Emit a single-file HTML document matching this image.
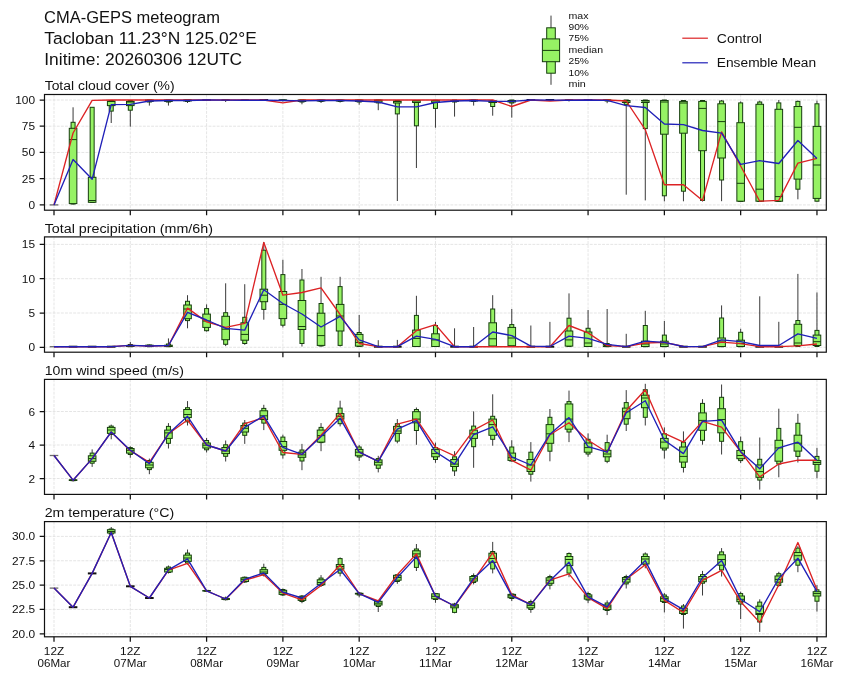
<!DOCTYPE html>
<html><head><meta charset="utf-8"><style>
html,body{margin:0;padding:0;background:#fff;}
body{width:845px;height:680px;overflow:hidden;}
svg{display:block;will-change:transform;}
text{font-family:"Liberation Sans", sans-serif;}
</style></head><body>
<svg width="845" height="680" viewBox="0 0 845 680">
<rect x="0" y="0" width="845" height="680" fill="#fff"/>
<text x="44.00" y="23.00" font-size="16.32" text-anchor="start" textLength="175.93" lengthAdjust="spacingAndGlyphs" fill="#111">CMA-GEPS meteogram</text>
<text x="44.30" y="43.80" font-size="16.32" text-anchor="start" textLength="212.45" lengthAdjust="spacingAndGlyphs" fill="#111">Tacloban 11.23°N 125.02°E</text>
<text x="44.30" y="65.40" font-size="16.32" text-anchor="start" textLength="197.86" lengthAdjust="spacingAndGlyphs" fill="#111">Initime: 20260306 12UTC</text>
<line x1="551.0" y1="15.6" x2="551.0" y2="84.8" stroke="#3a3a3a" stroke-width="1"/>
<rect x="546.7" y="27.8" width="8.6" height="45.4" fill="#96f264" stroke="#163d0e" stroke-width="1"/>
<rect x="542.4" y="38.9" width="17.2" height="22.8" fill="#96f264" stroke="#163d0e" stroke-width="1"/>
<line x1="542.4" y1="50.4" x2="559.6" y2="50.4" stroke="#163d0e" stroke-width="1"/>
<text x="568.50" y="18.60" font-size="9.75" text-anchor="start" textLength="20.04" lengthAdjust="spacingAndGlyphs" fill="#111">max</text>
<text x="568.50" y="30.00" font-size="9.75" text-anchor="start" textLength="20.45" lengthAdjust="spacingAndGlyphs" fill="#111">90%</text>
<text x="568.50" y="41.40" font-size="9.75" text-anchor="start" textLength="20.45" lengthAdjust="spacingAndGlyphs" fill="#111">75%</text>
<text x="568.50" y="52.80" font-size="9.75" text-anchor="start" textLength="34.49" lengthAdjust="spacingAndGlyphs" fill="#111">median</text>
<text x="568.50" y="64.20" font-size="9.75" text-anchor="start" textLength="20.45" lengthAdjust="spacingAndGlyphs" fill="#111">25%</text>
<text x="568.50" y="75.60" font-size="9.75" text-anchor="start" textLength="20.45" lengthAdjust="spacingAndGlyphs" fill="#111">10%</text>
<text x="568.50" y="87.00" font-size="9.75" text-anchor="start" textLength="17.35" lengthAdjust="spacingAndGlyphs" fill="#111">min</text>
<line x1="682.3" y1="38.2" x2="707.9" y2="38.2" stroke="#dc2224" stroke-width="1.2"/>
<line x1="682.3" y1="62.8" x2="707.9" y2="62.8" stroke="#2020b8" stroke-width="1.2"/>
<text x="716.80" y="42.70" font-size="13.25" text-anchor="start" textLength="45.18" lengthAdjust="spacingAndGlyphs" fill="#111">Control</text>
<text x="716.80" y="67.00" font-size="13.25" text-anchor="start" textLength="99.33" lengthAdjust="spacingAndGlyphs" fill="#111">Ensemble Mean</text>
<path d="M54.00 94.50V210.20 M130.30 94.50V210.20 M206.59 94.50V210.20 M282.89 94.50V210.20 M359.18 94.50V210.20 M435.48 94.50V210.20 M511.78 94.50V210.20 M588.07 94.50V210.20 M664.37 94.50V210.20 M740.66 94.50V210.20 M816.96 94.50V210.20 M44.50 204.90H826.30 M44.50 178.68H826.30 M44.50 152.45H826.30 M44.50 126.23H826.30 M44.50 100.00H826.30" stroke="#dedede" stroke-width="0.8" stroke-dasharray="2.9 1.2" fill="none"/>
<line x1="49.70" y1="204.90" x2="58.30" y2="204.90" stroke="#6a6a6a" stroke-width="1.3"/>
<line x1="73.07" y1="107.30" x2="73.07" y2="204.50" stroke="#3a3a3a" stroke-width="1"/>
<rect x="71.07" y="122.30" width="4.0" height="81.70" fill="#96f264" stroke="#163d0e" stroke-width="1"/>
<rect x="69.27" y="128.30" width="7.6" height="75.30" fill="#96f264" stroke="#163d0e" stroke-width="1"/>
<line x1="69.27" y1="139.60" x2="76.87" y2="139.60" stroke="#163d0e" stroke-width="1"/>
<line x1="92.15" y1="107.00" x2="92.15" y2="203.00" stroke="#3a3a3a" stroke-width="1"/>
<rect x="90.15" y="107.30" width="4.0" height="95.20" fill="#96f264" stroke="#163d0e" stroke-width="1"/>
<rect x="88.35" y="177.30" width="7.6" height="25.00" fill="#96f264" stroke="#163d0e" stroke-width="1"/>
<line x1="88.35" y1="200.50" x2="95.95" y2="200.50" stroke="#163d0e" stroke-width="1"/>
<line x1="111.22" y1="100.00" x2="111.22" y2="123.00" stroke="#3a3a3a" stroke-width="1"/>
<rect x="109.22" y="100.50" width="4.0" height="10.60" fill="#96f264" stroke="#163d0e" stroke-width="1"/>
<rect x="107.42" y="101.00" width="7.6" height="4.60" fill="#96f264" stroke="#163d0e" stroke-width="1"/>
<line x1="107.42" y1="101.50" x2="115.02" y2="101.50" stroke="#163d0e" stroke-width="1"/>
<line x1="130.30" y1="100.00" x2="130.30" y2="126.70" stroke="#3a3a3a" stroke-width="1"/>
<rect x="128.30" y="100.50" width="4.0" height="9.70" fill="#96f264" stroke="#163d0e" stroke-width="1"/>
<rect x="126.50" y="101.40" width="7.6" height="4.20" fill="#96f264" stroke="#163d0e" stroke-width="1"/>
<line x1="126.50" y1="102.00" x2="134.10" y2="102.00" stroke="#163d0e" stroke-width="1"/>
<line x1="149.37" y1="100.00" x2="149.37" y2="105.60" stroke="#3a3a3a" stroke-width="1"/>
<rect x="147.37" y="100.00" width="4.0" height="2.00" fill="#96f264" stroke="#163d0e" stroke-width="1"/>
<rect x="145.57" y="100.00" width="7.6" height="1.50" fill="#96f264" stroke="#163d0e" stroke-width="1"/>
<line x1="145.57" y1="100.50" x2="153.17" y2="100.50" stroke="#163d0e" stroke-width="1"/>
<line x1="168.44" y1="100.00" x2="168.44" y2="105.60" stroke="#3a3a3a" stroke-width="1"/>
<rect x="166.44" y="100.00" width="4.0" height="2.00" fill="#96f264" stroke="#163d0e" stroke-width="1"/>
<rect x="164.64" y="100.00" width="7.6" height="1.50" fill="#96f264" stroke="#163d0e" stroke-width="1"/>
<line x1="164.64" y1="100.50" x2="172.24" y2="100.50" stroke="#163d0e" stroke-width="1"/>
<line x1="187.52" y1="100.00" x2="187.52" y2="103.00" stroke="#3a3a3a" stroke-width="1"/>
<rect x="185.52" y="100.00" width="4.0" height="1.50" fill="#96f264" stroke="#163d0e" stroke-width="1"/>
<rect x="183.72" y="100.00" width="7.6" height="1.00" fill="#96f264" stroke="#163d0e" stroke-width="1"/>
<line x1="183.72" y1="100.00" x2="191.32" y2="100.00" stroke="#163d0e" stroke-width="1"/>
<line x1="206.59" y1="100.00" x2="206.59" y2="100.50" stroke="#3a3a3a" stroke-width="1"/>
<line x1="202.29" y1="100.00" x2="210.89" y2="100.00" stroke="#111" stroke-width="2"/>
<line x1="225.67" y1="100.00" x2="225.67" y2="102.00" stroke="#3a3a3a" stroke-width="1"/>
<rect x="223.67" y="100.00" width="4.0" height="0.50" fill="#96f264" stroke="#163d0e" stroke-width="1"/>
<rect x="221.87" y="100.00" width="7.6" height="0.50" fill="#96f264" stroke="#163d0e" stroke-width="1"/>
<line x1="221.87" y1="100.00" x2="229.47" y2="100.00" stroke="#163d0e" stroke-width="1"/>
<line x1="244.74" y1="100.00" x2="244.74" y2="101.00" stroke="#3a3a3a" stroke-width="1"/>
<rect x="242.74" y="100.00" width="4.0" height="0.50" fill="#96f264" stroke="#163d0e" stroke-width="1"/>
<rect x="240.94" y="100.00" width="7.6" height="0.01" fill="#96f264" stroke="#163d0e" stroke-width="1"/>
<line x1="240.94" y1="100.00" x2="248.54" y2="100.00" stroke="#163d0e" stroke-width="1"/>
<line x1="263.81" y1="100.00" x2="263.81" y2="100.50" stroke="#3a3a3a" stroke-width="1"/>
<line x1="259.51" y1="100.00" x2="268.11" y2="100.00" stroke="#111" stroke-width="2"/>
<line x1="282.89" y1="100.00" x2="282.89" y2="101.50" stroke="#3a3a3a" stroke-width="1"/>
<rect x="280.89" y="100.00" width="4.0" height="0.50" fill="#96f264" stroke="#163d0e" stroke-width="1"/>
<rect x="279.09" y="100.00" width="7.6" height="0.50" fill="#96f264" stroke="#163d0e" stroke-width="1"/>
<line x1="279.09" y1="100.00" x2="286.69" y2="100.00" stroke="#163d0e" stroke-width="1"/>
<line x1="301.96" y1="100.00" x2="301.96" y2="104.30" stroke="#3a3a3a" stroke-width="1"/>
<rect x="299.96" y="100.00" width="4.0" height="2.00" fill="#96f264" stroke="#163d0e" stroke-width="1"/>
<rect x="298.16" y="100.00" width="7.6" height="1.50" fill="#96f264" stroke="#163d0e" stroke-width="1"/>
<line x1="298.16" y1="100.50" x2="305.76" y2="100.50" stroke="#163d0e" stroke-width="1"/>
<line x1="321.04" y1="100.00" x2="321.04" y2="103.00" stroke="#3a3a3a" stroke-width="1"/>
<rect x="319.04" y="100.00" width="4.0" height="1.50" fill="#96f264" stroke="#163d0e" stroke-width="1"/>
<rect x="317.24" y="100.00" width="7.6" height="1.00" fill="#96f264" stroke="#163d0e" stroke-width="1"/>
<line x1="317.24" y1="100.50" x2="324.84" y2="100.50" stroke="#163d0e" stroke-width="1"/>
<line x1="340.11" y1="100.00" x2="340.11" y2="102.50" stroke="#3a3a3a" stroke-width="1"/>
<rect x="338.11" y="100.00" width="4.0" height="1.50" fill="#96f264" stroke="#163d0e" stroke-width="1"/>
<rect x="336.31" y="100.00" width="7.6" height="1.00" fill="#96f264" stroke="#163d0e" stroke-width="1"/>
<line x1="336.31" y1="100.50" x2="343.91" y2="100.50" stroke="#163d0e" stroke-width="1"/>
<line x1="359.18" y1="100.00" x2="359.18" y2="104.70" stroke="#3a3a3a" stroke-width="1"/>
<rect x="357.18" y="100.00" width="4.0" height="2.00" fill="#96f264" stroke="#163d0e" stroke-width="1"/>
<rect x="355.38" y="100.00" width="7.6" height="1.50" fill="#96f264" stroke="#163d0e" stroke-width="1"/>
<line x1="355.38" y1="100.50" x2="362.98" y2="100.50" stroke="#163d0e" stroke-width="1"/>
<line x1="378.26" y1="100.00" x2="378.26" y2="110.20" stroke="#3a3a3a" stroke-width="1"/>
<rect x="376.26" y="100.00" width="4.0" height="2.90" fill="#96f264" stroke="#163d0e" stroke-width="1"/>
<rect x="374.46" y="100.00" width="7.6" height="2.00" fill="#96f264" stroke="#163d0e" stroke-width="1"/>
<line x1="374.46" y1="100.50" x2="382.06" y2="100.50" stroke="#163d0e" stroke-width="1"/>
<line x1="397.33" y1="100.00" x2="397.33" y2="201.00" stroke="#3a3a3a" stroke-width="1"/>
<rect x="395.33" y="100.50" width="4.0" height="13.40" fill="#96f264" stroke="#163d0e" stroke-width="1"/>
<rect x="393.53" y="101.00" width="7.6" height="2.00" fill="#96f264" stroke="#163d0e" stroke-width="1"/>
<line x1="393.53" y1="101.50" x2="401.13" y2="101.50" stroke="#163d0e" stroke-width="1"/>
<line x1="416.41" y1="100.00" x2="416.41" y2="168.00" stroke="#3a3a3a" stroke-width="1"/>
<rect x="414.41" y="100.50" width="4.0" height="25.30" fill="#96f264" stroke="#163d0e" stroke-width="1"/>
<rect x="412.61" y="100.50" width="7.6" height="2.00" fill="#96f264" stroke="#163d0e" stroke-width="1"/>
<line x1="412.61" y1="101.00" x2="420.21" y2="101.00" stroke="#163d0e" stroke-width="1"/>
<line x1="435.48" y1="100.00" x2="435.48" y2="127.70" stroke="#3a3a3a" stroke-width="1"/>
<rect x="433.48" y="100.30" width="4.0" height="8.10" fill="#96f264" stroke="#163d0e" stroke-width="1"/>
<rect x="431.68" y="100.50" width="7.6" height="2.00" fill="#96f264" stroke="#163d0e" stroke-width="1"/>
<line x1="431.68" y1="101.00" x2="439.28" y2="101.00" stroke="#163d0e" stroke-width="1"/>
<line x1="454.55" y1="100.00" x2="454.55" y2="116.60" stroke="#3a3a3a" stroke-width="1"/>
<rect x="452.55" y="100.00" width="4.0" height="2.00" fill="#96f264" stroke="#163d0e" stroke-width="1"/>
<rect x="450.75" y="100.50" width="7.6" height="1.00" fill="#96f264" stroke="#163d0e" stroke-width="1"/>
<line x1="450.75" y1="101.00" x2="458.35" y2="101.00" stroke="#163d0e" stroke-width="1"/>
<line x1="473.63" y1="100.00" x2="473.63" y2="105.60" stroke="#3a3a3a" stroke-width="1"/>
<rect x="471.63" y="100.00" width="4.0" height="1.50" fill="#96f264" stroke="#163d0e" stroke-width="1"/>
<rect x="469.83" y="100.00" width="7.6" height="1.00" fill="#96f264" stroke="#163d0e" stroke-width="1"/>
<line x1="469.83" y1="100.50" x2="477.43" y2="100.50" stroke="#163d0e" stroke-width="1"/>
<line x1="492.70" y1="100.00" x2="492.70" y2="115.70" stroke="#3a3a3a" stroke-width="1"/>
<rect x="490.70" y="100.50" width="4.0" height="6.00" fill="#96f264" stroke="#163d0e" stroke-width="1"/>
<rect x="488.90" y="101.00" width="7.6" height="1.50" fill="#96f264" stroke="#163d0e" stroke-width="1"/>
<line x1="488.90" y1="101.50" x2="496.50" y2="101.50" stroke="#163d0e" stroke-width="1"/>
<line x1="511.78" y1="100.00" x2="511.78" y2="117.60" stroke="#3a3a3a" stroke-width="1"/>
<rect x="509.78" y="100.00" width="4.0" height="3.00" fill="#96f264" stroke="#163d0e" stroke-width="1"/>
<rect x="507.98" y="100.50" width="7.6" height="1.50" fill="#96f264" stroke="#163d0e" stroke-width="1"/>
<line x1="507.98" y1="101.00" x2="515.58" y2="101.00" stroke="#163d0e" stroke-width="1"/>
<line x1="530.85" y1="100.00" x2="530.85" y2="100.50" stroke="#3a3a3a" stroke-width="1"/>
<line x1="526.55" y1="100.00" x2="535.15" y2="100.00" stroke="#111" stroke-width="2"/>
<line x1="549.92" y1="100.00" x2="549.92" y2="101.00" stroke="#3a3a3a" stroke-width="1"/>
<line x1="545.62" y1="100.00" x2="554.22" y2="100.00" stroke="#111" stroke-width="2"/>
<line x1="569.00" y1="100.00" x2="569.00" y2="101.50" stroke="#3a3a3a" stroke-width="1"/>
<rect x="567.00" y="100.00" width="4.0" height="0.50" fill="#96f264" stroke="#163d0e" stroke-width="1"/>
<rect x="565.20" y="100.00" width="7.6" height="0.01" fill="#96f264" stroke="#163d0e" stroke-width="1"/>
<line x1="565.20" y1="100.00" x2="572.80" y2="100.00" stroke="#163d0e" stroke-width="1"/>
<line x1="588.07" y1="100.00" x2="588.07" y2="100.00" stroke="#3a3a3a" stroke-width="1"/>
<line x1="583.77" y1="100.00" x2="592.37" y2="100.00" stroke="#111" stroke-width="2"/>
<line x1="607.15" y1="100.00" x2="607.15" y2="103.20" stroke="#3a3a3a" stroke-width="1"/>
<rect x="605.15" y="100.00" width="4.0" height="1.00" fill="#96f264" stroke="#163d0e" stroke-width="1"/>
<rect x="603.35" y="100.00" width="7.6" height="0.50" fill="#96f264" stroke="#163d0e" stroke-width="1"/>
<line x1="603.35" y1="100.00" x2="610.95" y2="100.00" stroke="#163d0e" stroke-width="1"/>
<line x1="626.22" y1="100.00" x2="626.22" y2="194.70" stroke="#3a3a3a" stroke-width="1"/>
<rect x="624.22" y="100.00" width="4.0" height="4.70" fill="#96f264" stroke="#163d0e" stroke-width="1"/>
<rect x="622.42" y="100.50" width="7.6" height="2.00" fill="#96f264" stroke="#163d0e" stroke-width="1"/>
<line x1="622.42" y1="101.00" x2="630.02" y2="101.00" stroke="#163d0e" stroke-width="1"/>
<line x1="645.29" y1="100.00" x2="645.29" y2="200.40" stroke="#3a3a3a" stroke-width="1"/>
<rect x="643.29" y="100.00" width="4.0" height="28.60" fill="#96f264" stroke="#163d0e" stroke-width="1"/>
<rect x="641.49" y="100.50" width="7.6" height="2.00" fill="#96f264" stroke="#163d0e" stroke-width="1"/>
<line x1="641.49" y1="101.00" x2="649.09" y2="101.00" stroke="#163d0e" stroke-width="1"/>
<line x1="664.37" y1="100.00" x2="664.37" y2="201.30" stroke="#3a3a3a" stroke-width="1"/>
<rect x="662.37" y="100.00" width="4.0" height="95.80" fill="#96f264" stroke="#163d0e" stroke-width="1"/>
<rect x="660.57" y="100.50" width="7.6" height="33.70" fill="#96f264" stroke="#163d0e" stroke-width="1"/>
<line x1="660.57" y1="102.00" x2="668.17" y2="102.00" stroke="#163d0e" stroke-width="1"/>
<line x1="683.44" y1="100.00" x2="683.44" y2="201.30" stroke="#3a3a3a" stroke-width="1"/>
<rect x="681.44" y="100.50" width="4.0" height="90.70" fill="#96f264" stroke="#163d0e" stroke-width="1"/>
<rect x="679.64" y="101.40" width="7.6" height="31.80" fill="#96f264" stroke="#163d0e" stroke-width="1"/>
<line x1="679.64" y1="103.00" x2="687.24" y2="103.00" stroke="#163d0e" stroke-width="1"/>
<line x1="702.52" y1="100.00" x2="702.52" y2="201.50" stroke="#3a3a3a" stroke-width="1"/>
<rect x="700.52" y="100.50" width="4.0" height="99.90" fill="#96f264" stroke="#163d0e" stroke-width="1"/>
<rect x="698.72" y="101.40" width="7.6" height="49.30" fill="#96f264" stroke="#163d0e" stroke-width="1"/>
<line x1="698.72" y1="108.40" x2="706.32" y2="108.40" stroke="#163d0e" stroke-width="1"/>
<line x1="721.59" y1="100.00" x2="721.59" y2="201.20" stroke="#3a3a3a" stroke-width="1"/>
<rect x="719.59" y="101.00" width="4.0" height="79.00" fill="#96f264" stroke="#163d0e" stroke-width="1"/>
<rect x="717.79" y="103.80" width="7.6" height="54.20" fill="#96f264" stroke="#163d0e" stroke-width="1"/>
<line x1="717.79" y1="121.60" x2="725.39" y2="121.60" stroke="#163d0e" stroke-width="1"/>
<line x1="740.66" y1="101.40" x2="740.66" y2="201.80" stroke="#3a3a3a" stroke-width="1"/>
<rect x="738.66" y="102.90" width="4.0" height="98.60" fill="#96f264" stroke="#163d0e" stroke-width="1"/>
<rect x="736.86" y="122.70" width="7.6" height="78.50" fill="#96f264" stroke="#163d0e" stroke-width="1"/>
<line x1="736.86" y1="183.30" x2="744.46" y2="183.30" stroke="#163d0e" stroke-width="1"/>
<line x1="759.74" y1="100.70" x2="759.74" y2="201.80" stroke="#3a3a3a" stroke-width="1"/>
<rect x="757.74" y="102.00" width="4.0" height="99.50" fill="#96f264" stroke="#163d0e" stroke-width="1"/>
<rect x="755.94" y="104.30" width="7.6" height="96.90" fill="#96f264" stroke="#163d0e" stroke-width="1"/>
<line x1="755.94" y1="189.20" x2="763.54" y2="189.20" stroke="#163d0e" stroke-width="1"/>
<line x1="778.81" y1="100.00" x2="778.81" y2="201.80" stroke="#3a3a3a" stroke-width="1"/>
<rect x="776.81" y="102.90" width="4.0" height="98.60" fill="#96f264" stroke="#163d0e" stroke-width="1"/>
<rect x="775.01" y="109.30" width="7.6" height="91.90" fill="#96f264" stroke="#163d0e" stroke-width="1"/>
<line x1="775.01" y1="196.60" x2="782.61" y2="196.60" stroke="#163d0e" stroke-width="1"/>
<line x1="797.89" y1="100.50" x2="797.89" y2="199.30" stroke="#3a3a3a" stroke-width="1"/>
<rect x="795.89" y="101.40" width="4.0" height="87.80" fill="#96f264" stroke="#163d0e" stroke-width="1"/>
<rect x="794.09" y="106.50" width="7.6" height="72.60" fill="#96f264" stroke="#163d0e" stroke-width="1"/>
<line x1="794.09" y1="127.30" x2="801.69" y2="127.30" stroke="#163d0e" stroke-width="1"/>
<line x1="816.96" y1="100.70" x2="816.96" y2="201.50" stroke="#3a3a3a" stroke-width="1"/>
<rect x="814.96" y="103.80" width="4.0" height="97.40" fill="#96f264" stroke="#163d0e" stroke-width="1"/>
<rect x="813.16" y="126.40" width="7.6" height="72.00" fill="#96f264" stroke="#163d0e" stroke-width="1"/>
<line x1="813.16" y1="165.00" x2="820.76" y2="165.00" stroke="#163d0e" stroke-width="1"/>
<polyline points="54.00,204.90 73.07,133.00 92.15,100.30 111.22,100.00 130.30,100.00 149.37,100.00 168.44,100.00 187.52,100.00 206.59,100.00 225.67,100.00 244.74,100.00 263.81,100.00 282.89,102.90 301.96,100.00 321.04,100.00 340.11,100.00 359.18,100.00 378.26,100.00 397.33,100.00 416.41,100.00 435.48,100.00 454.55,100.00 473.63,100.00 492.70,100.00 511.78,106.50 530.85,100.00 549.92,101.00 569.00,100.00 588.07,100.00 607.15,100.00 626.22,101.00 645.29,129.60 664.37,184.70 683.44,184.70 702.52,200.40 721.59,131.90 740.66,166.00 759.74,201.20 778.81,200.30 797.89,163.10 816.96,158.40" fill="none" stroke="#dc2224" stroke-width="1.35" stroke-linejoin="round"/>
<polyline points="54.00,204.90 73.07,159.50 92.15,179.30 111.22,104.70 130.30,104.30 149.37,101.00 168.44,100.50 187.52,100.50 206.59,100.00 225.67,100.20 244.74,100.20 263.81,100.20 282.89,100.50 301.96,100.80 321.04,100.50 340.11,100.50 359.18,101.00 378.26,102.00 397.33,106.90 416.41,106.90 435.48,102.50 454.55,101.00 473.63,100.50 492.70,101.40 511.78,101.40 530.85,100.00 549.92,100.20 569.00,100.20 588.07,100.00 607.15,100.30 626.22,105.60 645.29,107.50 664.37,124.00 683.44,124.60 702.52,130.50 721.59,133.20 740.66,164.40 759.74,160.70 778.81,163.50 797.89,140.50 816.96,158.40" fill="none" stroke="#2020b8" stroke-width="1.35" stroke-linejoin="round"/>
<rect x="44.50" y="94.50" width="781.80" height="115.70" fill="none" stroke="#111" stroke-width="1.2"/>
<path d="M39.70 204.90H44.50 M39.70 178.68H44.50 M39.70 152.45H44.50 M39.70 126.23H44.50 M39.70 100.00H44.50 M54.00 210.20V215.20 M130.30 210.20V215.20 M206.59 210.20V215.20 M282.89 210.20V215.20 M359.18 210.20V215.20 M435.48 210.20V215.20 M511.78 210.20V215.20 M588.07 210.20V215.20 M664.37 210.20V215.20 M740.66 210.20V215.20 M816.96 210.20V215.20" stroke="#111" stroke-width="1.25" fill="none"/>
<text x="35.10" y="208.90" font-size="11.02" text-anchor="end" textLength="6.62" lengthAdjust="spacingAndGlyphs" fill="#111">0</text>
<text x="35.10" y="182.68" font-size="11.02" text-anchor="end" textLength="13.23" lengthAdjust="spacingAndGlyphs" fill="#111">25</text>
<text x="35.10" y="156.45" font-size="11.02" text-anchor="end" textLength="13.23" lengthAdjust="spacingAndGlyphs" fill="#111">50</text>
<text x="35.10" y="130.23" font-size="11.02" text-anchor="end" textLength="13.23" lengthAdjust="spacingAndGlyphs" fill="#111">75</text>
<text x="35.10" y="104.00" font-size="11.02" text-anchor="end" textLength="19.85" lengthAdjust="spacingAndGlyphs" fill="#111">100</text>
<text x="44.70" y="90.20" font-size="13.25" text-anchor="start" textLength="129.84" lengthAdjust="spacingAndGlyphs" fill="#111">Total cloud cover (%)</text>
<path d="M54.00 236.90V352.20 M130.30 236.90V352.20 M206.59 236.90V352.20 M282.89 236.90V352.20 M359.18 236.90V352.20 M435.48 236.90V352.20 M511.78 236.90V352.20 M588.07 236.90V352.20 M664.37 236.90V352.20 M740.66 236.90V352.20 M816.96 236.90V352.20 M44.50 347.30H826.30 M44.50 313.00H826.30 M44.50 278.70H826.30 M44.50 244.40H826.30" stroke="#dedede" stroke-width="0.8" stroke-dasharray="2.9 1.2" fill="none"/>
<line x1="49.70" y1="346.70" x2="58.30" y2="346.70" stroke="#6a6a6a" stroke-width="1.3"/>
<line x1="73.07" y1="346.70" x2="73.07" y2="346.70" stroke="#3a3a3a" stroke-width="1"/>
<line x1="68.77" y1="346.70" x2="77.37" y2="346.70" stroke="#111" stroke-width="2"/>
<line x1="92.15" y1="346.70" x2="92.15" y2="346.70" stroke="#3a3a3a" stroke-width="1"/>
<line x1="87.85" y1="346.70" x2="96.45" y2="346.70" stroke="#111" stroke-width="2"/>
<line x1="111.22" y1="346.70" x2="111.22" y2="346.70" stroke="#3a3a3a" stroke-width="1"/>
<line x1="106.92" y1="346.70" x2="115.52" y2="346.70" stroke="#111" stroke-width="2"/>
<line x1="130.30" y1="342.00" x2="130.30" y2="346.70" stroke="#3a3a3a" stroke-width="1"/>
<rect x="128.30" y="344.50" width="4.0" height="2.20" fill="#96f264" stroke="#163d0e" stroke-width="1"/>
<rect x="126.50" y="345.40" width="7.6" height="1.10" fill="#96f264" stroke="#163d0e" stroke-width="1"/>
<line x1="126.50" y1="346.00" x2="134.10" y2="346.00" stroke="#163d0e" stroke-width="1"/>
<line x1="149.37" y1="344.50" x2="149.37" y2="346.70" stroke="#3a3a3a" stroke-width="1"/>
<rect x="147.37" y="345.00" width="4.0" height="1.70" fill="#96f264" stroke="#163d0e" stroke-width="1"/>
<rect x="145.57" y="345.20" width="7.6" height="1.30" fill="#96f264" stroke="#163d0e" stroke-width="1"/>
<line x1="145.57" y1="346.00" x2="153.17" y2="346.00" stroke="#163d0e" stroke-width="1"/>
<line x1="168.44" y1="338.40" x2="168.44" y2="346.70" stroke="#3a3a3a" stroke-width="1"/>
<rect x="166.44" y="344.00" width="4.0" height="2.70" fill="#96f264" stroke="#163d0e" stroke-width="1"/>
<rect x="164.64" y="345.20" width="7.6" height="1.30" fill="#96f264" stroke="#163d0e" stroke-width="1"/>
<line x1="164.64" y1="346.00" x2="172.24" y2="346.00" stroke="#163d0e" stroke-width="1"/>
<line x1="187.52" y1="295.20" x2="187.52" y2="328.30" stroke="#3a3a3a" stroke-width="1"/>
<rect x="185.52" y="301.30" width="4.0" height="19.30" fill="#96f264" stroke="#163d0e" stroke-width="1"/>
<rect x="183.72" y="305.00" width="7.6" height="13.70" fill="#96f264" stroke="#163d0e" stroke-width="1"/>
<line x1="183.72" y1="309.00" x2="191.32" y2="309.00" stroke="#163d0e" stroke-width="1"/>
<line x1="206.59" y1="304.40" x2="206.59" y2="331.60" stroke="#3a3a3a" stroke-width="1"/>
<rect x="204.59" y="308.60" width="4.0" height="22.10" fill="#96f264" stroke="#163d0e" stroke-width="1"/>
<rect x="202.79" y="314.10" width="7.6" height="13.30" fill="#96f264" stroke="#163d0e" stroke-width="1"/>
<line x1="202.79" y1="321.00" x2="210.39" y2="321.00" stroke="#163d0e" stroke-width="1"/>
<line x1="225.67" y1="283.30" x2="225.67" y2="346.10" stroke="#3a3a3a" stroke-width="1"/>
<rect x="223.67" y="312.70" width="4.0" height="31.60" fill="#96f264" stroke="#163d0e" stroke-width="1"/>
<rect x="221.87" y="316.30" width="7.6" height="23.40" fill="#96f264" stroke="#163d0e" stroke-width="1"/>
<line x1="221.87" y1="329.20" x2="229.47" y2="329.20" stroke="#163d0e" stroke-width="1"/>
<line x1="244.74" y1="284.20" x2="244.74" y2="344.80" stroke="#3a3a3a" stroke-width="1"/>
<rect x="242.74" y="317.30" width="4.0" height="26.20" fill="#96f264" stroke="#163d0e" stroke-width="1"/>
<rect x="240.94" y="322.80" width="7.6" height="17.40" fill="#96f264" stroke="#163d0e" stroke-width="1"/>
<line x1="240.94" y1="334.40" x2="248.54" y2="334.40" stroke="#163d0e" stroke-width="1"/>
<line x1="263.81" y1="242.00" x2="263.81" y2="319.70" stroke="#3a3a3a" stroke-width="1"/>
<rect x="261.81" y="250.20" width="4.0" height="59.20" fill="#96f264" stroke="#163d0e" stroke-width="1"/>
<rect x="260.01" y="289.20" width="7.6" height="12.50" fill="#96f264" stroke="#163d0e" stroke-width="1"/>
<line x1="260.01" y1="295.20" x2="267.61" y2="295.20" stroke="#163d0e" stroke-width="1"/>
<line x1="282.89" y1="259.80" x2="282.89" y2="327.40" stroke="#3a3a3a" stroke-width="1"/>
<rect x="280.89" y="274.60" width="4.0" height="50.60" fill="#96f264" stroke="#163d0e" stroke-width="1"/>
<rect x="279.09" y="291.50" width="7.6" height="27.10" fill="#96f264" stroke="#163d0e" stroke-width="1"/>
<line x1="279.09" y1="304.40" x2="286.69" y2="304.40" stroke="#163d0e" stroke-width="1"/>
<line x1="301.96" y1="269.00" x2="301.96" y2="346.50" stroke="#3a3a3a" stroke-width="1"/>
<rect x="299.96" y="280.00" width="4.0" height="63.50" fill="#96f264" stroke="#163d0e" stroke-width="1"/>
<rect x="298.16" y="300.50" width="7.6" height="29.00" fill="#96f264" stroke="#163d0e" stroke-width="1"/>
<line x1="298.16" y1="326.50" x2="305.76" y2="326.50" stroke="#163d0e" stroke-width="1"/>
<line x1="321.04" y1="276.80" x2="321.04" y2="346.50" stroke="#3a3a3a" stroke-width="1"/>
<rect x="319.04" y="303.50" width="4.0" height="42.50" fill="#96f264" stroke="#163d0e" stroke-width="1"/>
<rect x="317.24" y="313.20" width="7.6" height="32.20" fill="#96f264" stroke="#163d0e" stroke-width="1"/>
<line x1="317.24" y1="335.60" x2="324.84" y2="335.60" stroke="#163d0e" stroke-width="1"/>
<line x1="340.11" y1="276.80" x2="340.11" y2="346.50" stroke="#3a3a3a" stroke-width="1"/>
<rect x="338.11" y="286.60" width="4.0" height="58.80" fill="#96f264" stroke="#163d0e" stroke-width="1"/>
<rect x="336.31" y="304.40" width="7.6" height="26.60" fill="#96f264" stroke="#163d0e" stroke-width="1"/>
<line x1="336.31" y1="316.00" x2="343.91" y2="316.00" stroke="#163d0e" stroke-width="1"/>
<line x1="359.18" y1="314.90" x2="359.18" y2="346.70" stroke="#3a3a3a" stroke-width="1"/>
<rect x="357.18" y="332.50" width="4.0" height="14.00" fill="#96f264" stroke="#163d0e" stroke-width="1"/>
<rect x="355.38" y="334.40" width="7.6" height="11.70" fill="#96f264" stroke="#163d0e" stroke-width="1"/>
<line x1="355.38" y1="342.40" x2="362.98" y2="342.40" stroke="#163d0e" stroke-width="1"/>
<line x1="378.26" y1="340.20" x2="378.26" y2="346.70" stroke="#3a3a3a" stroke-width="1"/>
<line x1="373.96" y1="346.70" x2="382.56" y2="346.70" stroke="#111" stroke-width="2"/>
<line x1="397.33" y1="339.90" x2="397.33" y2="346.70" stroke="#3a3a3a" stroke-width="1"/>
<line x1="393.03" y1="346.70" x2="401.63" y2="346.70" stroke="#111" stroke-width="2"/>
<line x1="416.41" y1="295.80" x2="416.41" y2="346.70" stroke="#3a3a3a" stroke-width="1"/>
<rect x="414.41" y="315.40" width="4.0" height="31.10" fill="#96f264" stroke="#163d0e" stroke-width="1"/>
<rect x="412.61" y="330.10" width="7.6" height="16.40" fill="#96f264" stroke="#163d0e" stroke-width="1"/>
<line x1="412.61" y1="338.40" x2="420.21" y2="338.40" stroke="#163d0e" stroke-width="1"/>
<line x1="435.48" y1="321.90" x2="435.48" y2="346.70" stroke="#3a3a3a" stroke-width="1"/>
<rect x="433.48" y="325.50" width="4.0" height="21.00" fill="#96f264" stroke="#163d0e" stroke-width="1"/>
<rect x="431.68" y="333.80" width="7.6" height="12.70" fill="#96f264" stroke="#163d0e" stroke-width="1"/>
<line x1="431.68" y1="339.90" x2="439.28" y2="339.90" stroke="#163d0e" stroke-width="1"/>
<line x1="454.55" y1="328.30" x2="454.55" y2="346.70" stroke="#3a3a3a" stroke-width="1"/>
<line x1="450.25" y1="346.70" x2="458.85" y2="346.70" stroke="#111" stroke-width="2"/>
<line x1="473.63" y1="327.00" x2="473.63" y2="346.70" stroke="#3a3a3a" stroke-width="1"/>
<line x1="469.33" y1="346.70" x2="477.93" y2="346.70" stroke="#111" stroke-width="2"/>
<line x1="492.70" y1="295.20" x2="492.70" y2="346.70" stroke="#3a3a3a" stroke-width="1"/>
<rect x="490.70" y="309.00" width="4.0" height="37.50" fill="#96f264" stroke="#163d0e" stroke-width="1"/>
<rect x="488.90" y="322.80" width="7.6" height="23.20" fill="#96f264" stroke="#163d0e" stroke-width="1"/>
<line x1="488.90" y1="338.80" x2="496.50" y2="338.80" stroke="#163d0e" stroke-width="1"/>
<line x1="511.78" y1="309.00" x2="511.78" y2="346.70" stroke="#3a3a3a" stroke-width="1"/>
<rect x="509.78" y="324.60" width="4.0" height="21.90" fill="#96f264" stroke="#163d0e" stroke-width="1"/>
<rect x="507.98" y="327.40" width="7.6" height="18.30" fill="#96f264" stroke="#163d0e" stroke-width="1"/>
<line x1="507.98" y1="338.00" x2="515.58" y2="338.00" stroke="#163d0e" stroke-width="1"/>
<line x1="530.85" y1="325.50" x2="530.85" y2="346.70" stroke="#3a3a3a" stroke-width="1"/>
<line x1="526.55" y1="346.70" x2="535.15" y2="346.70" stroke="#111" stroke-width="2"/>
<line x1="549.92" y1="321.90" x2="549.92" y2="346.70" stroke="#3a3a3a" stroke-width="1"/>
<line x1="545.62" y1="346.70" x2="554.22" y2="346.70" stroke="#111" stroke-width="2"/>
<line x1="569.00" y1="293.40" x2="569.00" y2="346.70" stroke="#3a3a3a" stroke-width="1"/>
<rect x="567.00" y="318.20" width="4.0" height="28.30" fill="#96f264" stroke="#163d0e" stroke-width="1"/>
<rect x="565.20" y="331.00" width="7.6" height="15.10" fill="#96f264" stroke="#163d0e" stroke-width="1"/>
<line x1="565.20" y1="339.90" x2="572.80" y2="339.90" stroke="#163d0e" stroke-width="1"/>
<line x1="588.07" y1="310.00" x2="588.07" y2="346.70" stroke="#3a3a3a" stroke-width="1"/>
<rect x="586.07" y="328.30" width="4.0" height="18.20" fill="#96f264" stroke="#163d0e" stroke-width="1"/>
<rect x="584.27" y="332.00" width="7.6" height="14.50" fill="#96f264" stroke="#163d0e" stroke-width="1"/>
<line x1="584.27" y1="343.00" x2="591.87" y2="343.00" stroke="#163d0e" stroke-width="1"/>
<line x1="607.15" y1="309.00" x2="607.15" y2="346.70" stroke="#3a3a3a" stroke-width="1"/>
<rect x="605.15" y="343.50" width="4.0" height="3.20" fill="#96f264" stroke="#163d0e" stroke-width="1"/>
<rect x="603.35" y="344.50" width="7.6" height="2.00" fill="#96f264" stroke="#163d0e" stroke-width="1"/>
<line x1="603.35" y1="345.50" x2="610.95" y2="345.50" stroke="#163d0e" stroke-width="1"/>
<line x1="626.22" y1="333.80" x2="626.22" y2="346.70" stroke="#3a3a3a" stroke-width="1"/>
<line x1="621.92" y1="346.70" x2="630.52" y2="346.70" stroke="#111" stroke-width="2"/>
<line x1="645.29" y1="310.80" x2="645.29" y2="346.70" stroke="#3a3a3a" stroke-width="1"/>
<rect x="643.29" y="325.50" width="4.0" height="21.20" fill="#96f264" stroke="#163d0e" stroke-width="1"/>
<rect x="641.49" y="341.20" width="7.6" height="5.30" fill="#96f264" stroke="#163d0e" stroke-width="1"/>
<line x1="641.49" y1="344.00" x2="649.09" y2="344.00" stroke="#163d0e" stroke-width="1"/>
<line x1="664.37" y1="321.00" x2="664.37" y2="346.70" stroke="#3a3a3a" stroke-width="1"/>
<rect x="662.37" y="335.10" width="4.0" height="11.60" fill="#96f264" stroke="#163d0e" stroke-width="1"/>
<rect x="660.57" y="341.20" width="7.6" height="5.30" fill="#96f264" stroke="#163d0e" stroke-width="1"/>
<line x1="660.57" y1="344.00" x2="668.17" y2="344.00" stroke="#163d0e" stroke-width="1"/>
<line x1="683.44" y1="346.70" x2="683.44" y2="346.70" stroke="#3a3a3a" stroke-width="1"/>
<line x1="679.14" y1="346.70" x2="687.74" y2="346.70" stroke="#111" stroke-width="2"/>
<line x1="702.52" y1="346.70" x2="702.52" y2="346.70" stroke="#3a3a3a" stroke-width="1"/>
<line x1="698.22" y1="346.70" x2="706.82" y2="346.70" stroke="#111" stroke-width="2"/>
<line x1="721.59" y1="305.40" x2="721.59" y2="346.70" stroke="#3a3a3a" stroke-width="1"/>
<rect x="719.59" y="318.00" width="4.0" height="28.70" fill="#96f264" stroke="#163d0e" stroke-width="1"/>
<rect x="717.79" y="338.00" width="7.6" height="8.50" fill="#96f264" stroke="#163d0e" stroke-width="1"/>
<line x1="717.79" y1="342.00" x2="725.39" y2="342.00" stroke="#163d0e" stroke-width="1"/>
<line x1="740.66" y1="328.80" x2="740.66" y2="346.70" stroke="#3a3a3a" stroke-width="1"/>
<rect x="738.66" y="332.30" width="4.0" height="14.40" fill="#96f264" stroke="#163d0e" stroke-width="1"/>
<rect x="736.86" y="340.20" width="7.6" height="6.30" fill="#96f264" stroke="#163d0e" stroke-width="1"/>
<line x1="736.86" y1="343.50" x2="744.46" y2="343.50" stroke="#163d0e" stroke-width="1"/>
<line x1="759.74" y1="296.30" x2="759.74" y2="346.70" stroke="#3a3a3a" stroke-width="1"/>
<line x1="755.44" y1="346.70" x2="764.04" y2="346.70" stroke="#111" stroke-width="2"/>
<line x1="778.81" y1="321.80" x2="778.81" y2="346.70" stroke="#3a3a3a" stroke-width="1"/>
<line x1="774.51" y1="346.70" x2="783.11" y2="346.70" stroke="#111" stroke-width="2"/>
<line x1="797.89" y1="273.90" x2="797.89" y2="346.70" stroke="#3a3a3a" stroke-width="1"/>
<rect x="795.89" y="320.50" width="4.0" height="26.00" fill="#96f264" stroke="#163d0e" stroke-width="1"/>
<rect x="794.09" y="324.30" width="7.6" height="21.20" fill="#96f264" stroke="#163d0e" stroke-width="1"/>
<line x1="794.09" y1="343.00" x2="801.69" y2="343.00" stroke="#163d0e" stroke-width="1"/>
<line x1="816.96" y1="292.50" x2="816.96" y2="346.70" stroke="#3a3a3a" stroke-width="1"/>
<rect x="814.96" y="330.40" width="4.0" height="16.10" fill="#96f264" stroke="#163d0e" stroke-width="1"/>
<rect x="813.16" y="335.10" width="7.6" height="10.40" fill="#96f264" stroke="#163d0e" stroke-width="1"/>
<line x1="813.16" y1="341.70" x2="820.76" y2="341.70" stroke="#163d0e" stroke-width="1"/>
<polyline points="54.00,346.70 73.07,346.70 92.15,346.70 111.22,346.70 130.30,345.40 149.37,346.20 168.44,345.70 187.52,308.10 206.59,321.90 225.67,327.40 244.74,323.30 263.81,242.50 282.89,295.20 301.96,292.50 321.04,287.90 340.11,314.50 359.18,343.50 378.26,346.70 397.33,346.70 416.41,330.70 435.48,324.60 454.55,346.70 473.63,346.70 492.70,346.70 511.78,346.70 530.85,346.70 549.92,346.70 569.00,325.50 588.07,332.90 607.15,345.70 626.22,346.70 645.29,343.00 664.37,342.40 683.44,346.50 702.52,346.70 721.59,342.10 740.66,343.60 759.74,346.70 778.81,346.70 797.89,345.90 816.96,344.00" fill="none" stroke="#dc2224" stroke-width="1.35" stroke-linejoin="round"/>
<polyline points="54.00,346.70 73.07,346.70 92.15,346.70 111.22,346.70 130.30,345.40 149.37,346.00 168.44,345.50 187.52,312.30 206.59,320.00 225.67,328.30 244.74,330.10 263.81,289.70 282.89,303.50 301.96,314.00 321.04,327.00 340.11,316.30 359.18,339.90 378.26,346.70 397.33,346.70 416.41,336.20 435.48,339.30 454.55,346.70 473.63,346.70 492.70,332.00 511.78,335.60 530.85,346.10 549.92,346.50 569.00,336.20 588.07,338.40 607.15,344.30 626.22,346.70 645.29,341.20 664.37,342.40 683.44,346.50 702.52,346.70 721.59,339.80 740.66,341.70 759.74,345.50 778.81,345.50 797.89,333.80 816.96,338.30" fill="none" stroke="#2020b8" stroke-width="1.35" stroke-linejoin="round"/>
<rect x="44.50" y="236.90" width="781.80" height="115.30" fill="none" stroke="#111" stroke-width="1.2"/>
<path d="M39.70 347.30H44.50 M39.70 313.00H44.50 M39.70 278.70H44.50 M39.70 244.40H44.50 M54.00 352.20V357.20 M130.30 352.20V357.20 M206.59 352.20V357.20 M282.89 352.20V357.20 M359.18 352.20V357.20 M435.48 352.20V357.20 M511.78 352.20V357.20 M588.07 352.20V357.20 M664.37 352.20V357.20 M740.66 352.20V357.20 M816.96 352.20V357.20" stroke="#111" stroke-width="1.25" fill="none"/>
<text x="35.10" y="351.30" font-size="11.02" text-anchor="end" textLength="6.62" lengthAdjust="spacingAndGlyphs" fill="#111">0</text>
<text x="35.10" y="317.00" font-size="11.02" text-anchor="end" textLength="6.62" lengthAdjust="spacingAndGlyphs" fill="#111">5</text>
<text x="35.10" y="282.70" font-size="11.02" text-anchor="end" textLength="13.23" lengthAdjust="spacingAndGlyphs" fill="#111">10</text>
<text x="35.10" y="248.40" font-size="11.02" text-anchor="end" textLength="13.23" lengthAdjust="spacingAndGlyphs" fill="#111">15</text>
<text x="44.70" y="232.60" font-size="13.25" text-anchor="start" textLength="168.28" lengthAdjust="spacingAndGlyphs" fill="#111">Total precipitation (mm/6h)</text>
<path d="M54.00 379.40V494.40 M130.30 379.40V494.40 M206.59 379.40V494.40 M282.89 379.40V494.40 M359.18 379.40V494.40 M435.48 379.40V494.40 M511.78 379.40V494.40 M588.07 379.40V494.40 M664.37 379.40V494.40 M740.66 379.40V494.40 M816.96 379.40V494.40 M44.50 478.50H826.30 M44.50 445.00H826.30 M44.50 411.50H826.30" stroke="#dedede" stroke-width="0.8" stroke-dasharray="2.9 1.2" fill="none"/>
<line x1="49.70" y1="455.50" x2="58.30" y2="455.50" stroke="#6a6a6a" stroke-width="1.3"/>
<line x1="73.07" y1="479.00" x2="73.07" y2="481.50" stroke="#3a3a3a" stroke-width="1"/>
<rect x="71.07" y="479.60" width="4.0" height="1.10" fill="#96f264" stroke="#163d0e" stroke-width="1"/>
<rect x="69.27" y="479.80" width="7.6" height="0.70" fill="#96f264" stroke="#163d0e" stroke-width="1"/>
<line x1="69.27" y1="480.20" x2="76.87" y2="480.20" stroke="#163d0e" stroke-width="1"/>
<line x1="92.15" y1="449.40" x2="92.15" y2="466.90" stroke="#3a3a3a" stroke-width="1"/>
<rect x="90.15" y="453.10" width="4.0" height="10.10" fill="#96f264" stroke="#163d0e" stroke-width="1"/>
<rect x="88.35" y="455.80" width="7.6" height="5.50" fill="#96f264" stroke="#163d0e" stroke-width="1"/>
<line x1="88.35" y1="458.60" x2="95.95" y2="458.60" stroke="#163d0e" stroke-width="1"/>
<line x1="111.22" y1="424.60" x2="111.22" y2="439.30" stroke="#3a3a3a" stroke-width="1"/>
<rect x="109.22" y="426.10" width="4.0" height="8.40" fill="#96f264" stroke="#163d0e" stroke-width="1"/>
<rect x="107.42" y="427.40" width="7.6" height="6.00" fill="#96f264" stroke="#163d0e" stroke-width="1"/>
<line x1="107.42" y1="430.00" x2="115.02" y2="430.00" stroke="#163d0e" stroke-width="1"/>
<line x1="130.30" y1="446.30" x2="130.30" y2="457.70" stroke="#3a3a3a" stroke-width="1"/>
<rect x="128.30" y="447.60" width="4.0" height="6.90" fill="#96f264" stroke="#163d0e" stroke-width="1"/>
<rect x="126.50" y="448.50" width="7.6" height="4.60" fill="#96f264" stroke="#163d0e" stroke-width="1"/>
<line x1="126.50" y1="450.30" x2="134.10" y2="450.30" stroke="#163d0e" stroke-width="1"/>
<line x1="149.37" y1="458.60" x2="149.37" y2="474.20" stroke="#3a3a3a" stroke-width="1"/>
<rect x="147.37" y="460.50" width="4.0" height="9.10" fill="#96f264" stroke="#163d0e" stroke-width="1"/>
<rect x="145.57" y="462.30" width="7.6" height="5.50" fill="#96f264" stroke="#163d0e" stroke-width="1"/>
<line x1="145.57" y1="465.00" x2="153.17" y2="465.00" stroke="#163d0e" stroke-width="1"/>
<line x1="168.44" y1="423.10" x2="168.44" y2="448.50" stroke="#3a3a3a" stroke-width="1"/>
<rect x="166.44" y="426.40" width="4.0" height="16.90" fill="#96f264" stroke="#163d0e" stroke-width="1"/>
<rect x="164.64" y="430.10" width="7.6" height="8.30" fill="#96f264" stroke="#163d0e" stroke-width="1"/>
<line x1="164.64" y1="432.90" x2="172.24" y2="432.90" stroke="#163d0e" stroke-width="1"/>
<line x1="187.52" y1="401.10" x2="187.52" y2="425.50" stroke="#3a3a3a" stroke-width="1"/>
<rect x="185.52" y="407.70" width="4.0" height="14.10" fill="#96f264" stroke="#163d0e" stroke-width="1"/>
<rect x="183.72" y="409.50" width="7.6" height="8.10" fill="#96f264" stroke="#163d0e" stroke-width="1"/>
<line x1="183.72" y1="414.50" x2="191.32" y2="414.50" stroke="#163d0e" stroke-width="1"/>
<line x1="206.59" y1="438.00" x2="206.59" y2="452.50" stroke="#3a3a3a" stroke-width="1"/>
<rect x="204.59" y="440.50" width="4.0" height="9.30" fill="#96f264" stroke="#163d0e" stroke-width="1"/>
<rect x="202.79" y="443.00" width="7.6" height="5.00" fill="#96f264" stroke="#163d0e" stroke-width="1"/>
<line x1="202.79" y1="445.20" x2="210.39" y2="445.20" stroke="#163d0e" stroke-width="1"/>
<line x1="225.67" y1="440.50" x2="225.67" y2="461.50" stroke="#3a3a3a" stroke-width="1"/>
<rect x="223.67" y="444.80" width="4.0" height="11.50" fill="#96f264" stroke="#163d0e" stroke-width="1"/>
<rect x="221.87" y="447.50" width="7.6" height="6.10" fill="#96f264" stroke="#163d0e" stroke-width="1"/>
<line x1="221.87" y1="451.00" x2="229.47" y2="451.00" stroke="#163d0e" stroke-width="1"/>
<line x1="244.74" y1="420.00" x2="244.74" y2="443.90" stroke="#3a3a3a" stroke-width="1"/>
<rect x="242.74" y="423.10" width="4.0" height="12.20" fill="#96f264" stroke="#163d0e" stroke-width="1"/>
<rect x="240.94" y="425.50" width="7.6" height="6.50" fill="#96f264" stroke="#163d0e" stroke-width="1"/>
<line x1="240.94" y1="428.30" x2="248.54" y2="428.30" stroke="#163d0e" stroke-width="1"/>
<line x1="263.81" y1="404.80" x2="263.81" y2="430.10" stroke="#3a3a3a" stroke-width="1"/>
<rect x="261.81" y="408.40" width="4.0" height="14.70" fill="#96f264" stroke="#163d0e" stroke-width="1"/>
<rect x="260.01" y="410.80" width="7.6" height="8.70" fill="#96f264" stroke="#163d0e" stroke-width="1"/>
<line x1="260.01" y1="415.80" x2="267.61" y2="415.80" stroke="#163d0e" stroke-width="1"/>
<line x1="282.89" y1="434.70" x2="282.89" y2="458.60" stroke="#3a3a3a" stroke-width="1"/>
<rect x="280.89" y="437.10" width="4.0" height="17.80" fill="#96f264" stroke="#163d0e" stroke-width="1"/>
<rect x="279.09" y="441.50" width="7.6" height="8.80" fill="#96f264" stroke="#163d0e" stroke-width="1"/>
<line x1="279.09" y1="446.60" x2="286.69" y2="446.60" stroke="#163d0e" stroke-width="1"/>
<line x1="301.96" y1="443.90" x2="301.96" y2="470.20" stroke="#3a3a3a" stroke-width="1"/>
<rect x="299.96" y="450.00" width="4.0" height="11.00" fill="#96f264" stroke="#163d0e" stroke-width="1"/>
<rect x="298.16" y="452.20" width="7.6" height="5.10" fill="#96f264" stroke="#163d0e" stroke-width="1"/>
<line x1="298.16" y1="454.90" x2="305.76" y2="454.90" stroke="#163d0e" stroke-width="1"/>
<line x1="321.04" y1="423.10" x2="321.04" y2="451.20" stroke="#3a3a3a" stroke-width="1"/>
<rect x="319.04" y="427.40" width="4.0" height="15.20" fill="#96f264" stroke="#163d0e" stroke-width="1"/>
<rect x="317.24" y="430.10" width="7.6" height="12.00" fill="#96f264" stroke="#163d0e" stroke-width="1"/>
<line x1="317.24" y1="435.60" x2="324.84" y2="435.60" stroke="#163d0e" stroke-width="1"/>
<line x1="340.11" y1="400.70" x2="340.11" y2="426.40" stroke="#3a3a3a" stroke-width="1"/>
<rect x="338.11" y="408.10" width="4.0" height="15.60" fill="#96f264" stroke="#163d0e" stroke-width="1"/>
<rect x="336.31" y="413.60" width="7.6" height="5.50" fill="#96f264" stroke="#163d0e" stroke-width="1"/>
<line x1="336.31" y1="416.30" x2="343.91" y2="416.30" stroke="#163d0e" stroke-width="1"/>
<line x1="359.18" y1="444.80" x2="359.18" y2="461.00" stroke="#3a3a3a" stroke-width="1"/>
<rect x="357.18" y="447.00" width="4.0" height="10.00" fill="#96f264" stroke="#163d0e" stroke-width="1"/>
<rect x="355.38" y="449.40" width="7.6" height="6.40" fill="#96f264" stroke="#163d0e" stroke-width="1"/>
<line x1="355.38" y1="452.20" x2="362.98" y2="452.20" stroke="#163d0e" stroke-width="1"/>
<line x1="378.26" y1="455.80" x2="378.26" y2="472.40" stroke="#3a3a3a" stroke-width="1"/>
<rect x="376.26" y="458.60" width="4.0" height="9.70" fill="#96f264" stroke="#163d0e" stroke-width="1"/>
<rect x="374.46" y="459.90" width="7.6" height="5.10" fill="#96f264" stroke="#163d0e" stroke-width="1"/>
<line x1="374.46" y1="462.30" x2="382.06" y2="462.30" stroke="#163d0e" stroke-width="1"/>
<line x1="397.33" y1="419.10" x2="397.33" y2="443.30" stroke="#3a3a3a" stroke-width="1"/>
<rect x="395.33" y="423.70" width="4.0" height="17.40" fill="#96f264" stroke="#163d0e" stroke-width="1"/>
<rect x="393.53" y="426.40" width="7.6" height="7.00" fill="#96f264" stroke="#163d0e" stroke-width="1"/>
<line x1="393.53" y1="431.00" x2="401.13" y2="431.00" stroke="#163d0e" stroke-width="1"/>
<line x1="416.41" y1="407.50" x2="416.41" y2="444.80" stroke="#3a3a3a" stroke-width="1"/>
<rect x="414.41" y="409.50" width="4.0" height="21.00" fill="#96f264" stroke="#163d0e" stroke-width="1"/>
<rect x="412.61" y="411.70" width="7.6" height="11.10" fill="#96f264" stroke="#163d0e" stroke-width="1"/>
<line x1="412.61" y1="419.10" x2="420.21" y2="419.10" stroke="#163d0e" stroke-width="1"/>
<line x1="435.48" y1="442.60" x2="435.48" y2="462.80" stroke="#3a3a3a" stroke-width="1"/>
<rect x="433.48" y="447.60" width="4.0" height="11.90" fill="#96f264" stroke="#163d0e" stroke-width="1"/>
<rect x="431.68" y="449.40" width="7.6" height="7.40" fill="#96f264" stroke="#163d0e" stroke-width="1"/>
<line x1="431.68" y1="453.60" x2="439.28" y2="453.60" stroke="#163d0e" stroke-width="1"/>
<line x1="454.55" y1="451.20" x2="454.55" y2="476.00" stroke="#3a3a3a" stroke-width="1"/>
<rect x="452.55" y="456.80" width="4.0" height="14.10" fill="#96f264" stroke="#163d0e" stroke-width="1"/>
<rect x="450.75" y="459.50" width="7.6" height="7.00" fill="#96f264" stroke="#163d0e" stroke-width="1"/>
<line x1="450.75" y1="464.10" x2="458.35" y2="464.10" stroke="#163d0e" stroke-width="1"/>
<line x1="473.63" y1="411.40" x2="473.63" y2="467.80" stroke="#3a3a3a" stroke-width="1"/>
<rect x="471.63" y="426.10" width="4.0" height="20.60" fill="#96f264" stroke="#163d0e" stroke-width="1"/>
<rect x="469.83" y="430.10" width="7.6" height="8.30" fill="#96f264" stroke="#163d0e" stroke-width="1"/>
<line x1="469.83" y1="433.80" x2="477.43" y2="433.80" stroke="#163d0e" stroke-width="1"/>
<line x1="492.70" y1="394.30" x2="492.70" y2="445.70" stroke="#3a3a3a" stroke-width="1"/>
<rect x="490.70" y="416.30" width="4.0" height="23.00" fill="#96f264" stroke="#163d0e" stroke-width="1"/>
<rect x="488.90" y="419.10" width="7.6" height="16.20" fill="#96f264" stroke="#163d0e" stroke-width="1"/>
<line x1="488.90" y1="424.60" x2="496.50" y2="424.60" stroke="#163d0e" stroke-width="1"/>
<line x1="511.78" y1="440.20" x2="511.78" y2="461.50" stroke="#3a3a3a" stroke-width="1"/>
<rect x="509.78" y="447.00" width="4.0" height="14.00" fill="#96f264" stroke="#163d0e" stroke-width="1"/>
<rect x="507.98" y="453.10" width="7.6" height="7.30" fill="#96f264" stroke="#163d0e" stroke-width="1"/>
<line x1="507.98" y1="457.70" x2="515.58" y2="457.70" stroke="#163d0e" stroke-width="1"/>
<line x1="530.85" y1="442.10" x2="530.85" y2="481.60" stroke="#3a3a3a" stroke-width="1"/>
<rect x="528.85" y="452.20" width="4.0" height="22.00" fill="#96f264" stroke="#163d0e" stroke-width="1"/>
<rect x="527.05" y="459.50" width="7.6" height="12.00" fill="#96f264" stroke="#163d0e" stroke-width="1"/>
<line x1="527.05" y1="465.00" x2="534.65" y2="465.00" stroke="#163d0e" stroke-width="1"/>
<line x1="549.92" y1="409.00" x2="549.92" y2="461.30" stroke="#3a3a3a" stroke-width="1"/>
<rect x="547.92" y="417.30" width="4.0" height="33.90" fill="#96f264" stroke="#163d0e" stroke-width="1"/>
<rect x="546.12" y="424.60" width="7.6" height="18.70" fill="#96f264" stroke="#163d0e" stroke-width="1"/>
<line x1="546.12" y1="433.80" x2="553.72" y2="433.80" stroke="#163d0e" stroke-width="1"/>
<line x1="569.00" y1="390.60" x2="569.00" y2="442.10" stroke="#3a3a3a" stroke-width="1"/>
<rect x="567.00" y="401.60" width="4.0" height="30.40" fill="#96f264" stroke="#163d0e" stroke-width="1"/>
<rect x="565.20" y="404.00" width="7.6" height="25.20" fill="#96f264" stroke="#163d0e" stroke-width="1"/>
<line x1="565.20" y1="419.10" x2="572.80" y2="419.10" stroke="#163d0e" stroke-width="1"/>
<line x1="588.07" y1="433.40" x2="588.07" y2="456.80" stroke="#3a3a3a" stroke-width="1"/>
<rect x="586.07" y="439.30" width="4.0" height="14.70" fill="#96f264" stroke="#163d0e" stroke-width="1"/>
<rect x="584.27" y="443.00" width="7.6" height="9.20" fill="#96f264" stroke="#163d0e" stroke-width="1"/>
<line x1="584.27" y1="447.60" x2="591.87" y2="447.60" stroke="#163d0e" stroke-width="1"/>
<line x1="607.15" y1="434.70" x2="607.15" y2="463.20" stroke="#3a3a3a" stroke-width="1"/>
<rect x="605.15" y="442.60" width="4.0" height="18.70" fill="#96f264" stroke="#163d0e" stroke-width="1"/>
<rect x="603.35" y="450.30" width="7.6" height="6.50" fill="#96f264" stroke="#163d0e" stroke-width="1"/>
<line x1="603.35" y1="454.00" x2="610.95" y2="454.00" stroke="#163d0e" stroke-width="1"/>
<line x1="626.22" y1="390.10" x2="626.22" y2="431.00" stroke="#3a3a3a" stroke-width="1"/>
<rect x="624.22" y="402.60" width="4.0" height="21.60" fill="#96f264" stroke="#163d0e" stroke-width="1"/>
<rect x="622.42" y="408.10" width="7.6" height="10.60" fill="#96f264" stroke="#163d0e" stroke-width="1"/>
<line x1="622.42" y1="411.70" x2="630.02" y2="411.70" stroke="#163d0e" stroke-width="1"/>
<line x1="645.29" y1="383.80" x2="645.29" y2="425.50" stroke="#3a3a3a" stroke-width="1"/>
<rect x="643.29" y="389.70" width="4.0" height="27.60" fill="#96f264" stroke="#163d0e" stroke-width="1"/>
<rect x="641.49" y="395.20" width="7.6" height="12.50" fill="#96f264" stroke="#163d0e" stroke-width="1"/>
<line x1="641.49" y1="398.00" x2="649.09" y2="398.00" stroke="#163d0e" stroke-width="1"/>
<line x1="664.37" y1="427.40" x2="664.37" y2="458.60" stroke="#3a3a3a" stroke-width="1"/>
<rect x="662.37" y="433.80" width="4.0" height="16.20" fill="#96f264" stroke="#163d0e" stroke-width="1"/>
<rect x="660.57" y="438.40" width="7.6" height="9.70" fill="#96f264" stroke="#163d0e" stroke-width="1"/>
<line x1="660.57" y1="442.10" x2="668.17" y2="442.10" stroke="#163d0e" stroke-width="1"/>
<line x1="683.44" y1="431.40" x2="683.44" y2="472.50" stroke="#3a3a3a" stroke-width="1"/>
<rect x="681.44" y="442.20" width="4.0" height="25.20" fill="#96f264" stroke="#163d0e" stroke-width="1"/>
<rect x="679.64" y="447.00" width="7.6" height="15.10" fill="#96f264" stroke="#163d0e" stroke-width="1"/>
<line x1="679.64" y1="456.40" x2="687.24" y2="456.40" stroke="#163d0e" stroke-width="1"/>
<line x1="702.52" y1="399.20" x2="702.52" y2="444.70" stroke="#3a3a3a" stroke-width="1"/>
<rect x="700.52" y="403.40" width="4.0" height="36.90" fill="#96f264" stroke="#163d0e" stroke-width="1"/>
<rect x="698.72" y="412.90" width="7.6" height="17.40" fill="#96f264" stroke="#163d0e" stroke-width="1"/>
<line x1="698.72" y1="420.40" x2="706.32" y2="420.40" stroke="#163d0e" stroke-width="1"/>
<line x1="721.59" y1="384.50" x2="721.59" y2="454.50" stroke="#3a3a3a" stroke-width="1"/>
<rect x="719.59" y="397.30" width="4.0" height="44.00" fill="#96f264" stroke="#163d0e" stroke-width="1"/>
<rect x="717.79" y="408.70" width="7.6" height="24.10" fill="#96f264" stroke="#163d0e" stroke-width="1"/>
<line x1="717.79" y1="419.50" x2="725.39" y2="419.50" stroke="#163d0e" stroke-width="1"/>
<line x1="740.66" y1="436.50" x2="740.66" y2="463.00" stroke="#3a3a3a" stroke-width="1"/>
<rect x="738.66" y="441.70" width="4.0" height="18.90" fill="#96f264" stroke="#163d0e" stroke-width="1"/>
<rect x="736.86" y="450.40" width="7.6" height="8.30" fill="#96f264" stroke="#163d0e" stroke-width="1"/>
<line x1="736.86" y1="455.50" x2="744.46" y2="455.50" stroke="#163d0e" stroke-width="1"/>
<line x1="759.74" y1="437.50" x2="759.74" y2="489.60" stroke="#3a3a3a" stroke-width="1"/>
<rect x="757.74" y="459.30" width="4.0" height="20.80" fill="#96f264" stroke="#163d0e" stroke-width="1"/>
<rect x="755.94" y="465.00" width="7.6" height="12.30" fill="#96f264" stroke="#163d0e" stroke-width="1"/>
<line x1="755.94" y1="471.60" x2="763.54" y2="471.60" stroke="#163d0e" stroke-width="1"/>
<line x1="778.81" y1="408.70" x2="778.81" y2="477.30" stroke="#3a3a3a" stroke-width="1"/>
<rect x="776.81" y="428.40" width="4.0" height="35.60" fill="#96f264" stroke="#163d0e" stroke-width="1"/>
<rect x="775.01" y="440.30" width="7.6" height="20.90" fill="#96f264" stroke="#163d0e" stroke-width="1"/>
<line x1="775.01" y1="447.90" x2="782.61" y2="447.90" stroke="#163d0e" stroke-width="1"/>
<line x1="797.89" y1="413.80" x2="797.89" y2="462.50" stroke="#3a3a3a" stroke-width="1"/>
<rect x="795.89" y="423.30" width="4.0" height="33.10" fill="#96f264" stroke="#163d0e" stroke-width="1"/>
<rect x="794.09" y="435.20" width="7.6" height="15.90" fill="#96f264" stroke="#163d0e" stroke-width="1"/>
<line x1="794.09" y1="443.20" x2="801.69" y2="443.20" stroke="#163d0e" stroke-width="1"/>
<line x1="816.96" y1="447.90" x2="816.96" y2="478.20" stroke="#3a3a3a" stroke-width="1"/>
<rect x="814.96" y="456.40" width="4.0" height="14.80" fill="#96f264" stroke="#163d0e" stroke-width="1"/>
<rect x="813.16" y="460.60" width="7.6" height="3.80" fill="#96f264" stroke="#163d0e" stroke-width="1"/>
<line x1="813.16" y1="462.50" x2="820.76" y2="462.50" stroke="#163d0e" stroke-width="1"/>
<polyline points="54.00,455.50 73.07,480.20 92.15,458.60 111.22,432.00 130.30,450.70 149.37,462.30 168.44,433.80 187.52,420.00 206.59,445.00 225.67,451.00 244.74,423.70 263.81,417.60 282.89,452.50 301.96,454.40 321.04,435.30 340.11,413.60 359.18,452.20 378.26,461.30 397.33,424.20 416.41,419.10 435.48,447.00 454.55,455.80 473.63,430.10 492.70,420.00 511.78,460.40 530.85,470.20 549.92,434.70 569.00,422.80 588.07,440.20 607.15,452.20 626.22,410.80 645.29,389.70 664.37,433.40 683.44,442.20 702.52,421.40 721.59,427.10 740.66,451.70 759.74,476.90 778.81,464.00 797.89,460.20 816.96,460.20" fill="none" stroke="#dc2224" stroke-width="1.35" stroke-linejoin="round"/>
<polyline points="54.00,455.50 73.07,480.20 92.15,458.60 111.22,432.00 130.30,450.30 149.37,463.60 168.44,433.80 187.52,416.30 206.59,445.00 225.67,451.00 244.74,427.40 263.81,415.80 282.89,447.30 301.96,454.40 321.04,436.50 340.11,418.20 359.18,452.20 378.26,461.30 397.33,429.20 416.41,420.70 435.48,451.80 454.55,464.10 473.63,434.70 492.70,426.80 511.78,456.80 530.85,465.00 549.92,434.20 569.00,417.60 588.07,446.70 607.15,452.20 626.22,412.70 645.29,400.70 664.37,440.20 683.44,453.60 702.52,421.40 721.59,420.10 740.66,451.70 759.74,468.70 778.81,447.90 797.89,442.20 816.96,460.20" fill="none" stroke="#2020b8" stroke-width="1.35" stroke-linejoin="round"/>
<rect x="44.50" y="379.40" width="781.80" height="115.00" fill="none" stroke="#111" stroke-width="1.2"/>
<path d="M39.70 478.50H44.50 M39.70 445.00H44.50 M39.70 411.50H44.50 M54.00 494.40V499.40 M130.30 494.40V499.40 M206.59 494.40V499.40 M282.89 494.40V499.40 M359.18 494.40V499.40 M435.48 494.40V499.40 M511.78 494.40V499.40 M588.07 494.40V499.40 M664.37 494.40V499.40 M740.66 494.40V499.40 M816.96 494.40V499.40" stroke="#111" stroke-width="1.25" fill="none"/>
<text x="35.10" y="482.50" font-size="11.02" text-anchor="end" textLength="6.62" lengthAdjust="spacingAndGlyphs" fill="#111">2</text>
<text x="35.10" y="449.00" font-size="11.02" text-anchor="end" textLength="6.62" lengthAdjust="spacingAndGlyphs" fill="#111">4</text>
<text x="35.10" y="415.50" font-size="11.02" text-anchor="end" textLength="6.62" lengthAdjust="spacingAndGlyphs" fill="#111">6</text>
<text x="44.70" y="375.10" font-size="13.25" text-anchor="start" textLength="139.17" lengthAdjust="spacingAndGlyphs" fill="#111">10m wind speed (m/s)</text>
<path d="M54.00 521.60V636.80 M130.30 521.60V636.80 M206.59 521.60V636.80 M282.89 521.60V636.80 M359.18 521.60V636.80 M435.48 521.60V636.80 M511.78 521.60V636.80 M588.07 521.60V636.80 M664.37 521.60V636.80 M740.66 521.60V636.80 M816.96 521.60V636.80 M44.50 633.80H826.30 M44.50 609.45H826.30 M44.50 585.10H826.30 M44.50 560.75H826.30 M44.50 536.40H826.30" stroke="#dedede" stroke-width="0.8" stroke-dasharray="2.9 1.2" fill="none"/>
<line x1="49.70" y1="588.10" x2="58.30" y2="588.10" stroke="#6a6a6a" stroke-width="1.3"/>
<line x1="73.07" y1="607.20" x2="73.07" y2="607.20" stroke="#3a3a3a" stroke-width="1"/>
<line x1="68.77" y1="607.20" x2="77.37" y2="607.20" stroke="#111" stroke-width="2"/>
<line x1="92.15" y1="573.40" x2="92.15" y2="573.40" stroke="#3a3a3a" stroke-width="1"/>
<line x1="87.85" y1="573.40" x2="96.45" y2="573.40" stroke="#111" stroke-width="2"/>
<line x1="111.22" y1="527.00" x2="111.22" y2="535.00" stroke="#3a3a3a" stroke-width="1"/>
<rect x="109.22" y="529.00" width="4.0" height="5.00" fill="#96f264" stroke="#163d0e" stroke-width="1"/>
<rect x="107.42" y="529.70" width="7.6" height="3.30" fill="#96f264" stroke="#163d0e" stroke-width="1"/>
<line x1="107.42" y1="531.50" x2="115.02" y2="531.50" stroke="#163d0e" stroke-width="1"/>
<line x1="130.30" y1="586.30" x2="130.30" y2="586.30" stroke="#3a3a3a" stroke-width="1"/>
<line x1="126.00" y1="586.30" x2="134.60" y2="586.30" stroke="#111" stroke-width="2"/>
<line x1="149.37" y1="598.00" x2="149.37" y2="598.00" stroke="#3a3a3a" stroke-width="1"/>
<line x1="145.07" y1="598.00" x2="153.67" y2="598.00" stroke="#111" stroke-width="2"/>
<line x1="168.44" y1="565.50" x2="168.44" y2="573.50" stroke="#3a3a3a" stroke-width="1"/>
<rect x="166.44" y="567.00" width="4.0" height="5.50" fill="#96f264" stroke="#163d0e" stroke-width="1"/>
<rect x="164.64" y="568.30" width="7.6" height="3.70" fill="#96f264" stroke="#163d0e" stroke-width="1"/>
<line x1="164.64" y1="569.50" x2="172.24" y2="569.50" stroke="#163d0e" stroke-width="1"/>
<line x1="187.52" y1="549.50" x2="187.52" y2="564.60" stroke="#3a3a3a" stroke-width="1"/>
<rect x="185.52" y="553.10" width="4.0" height="9.90" fill="#96f264" stroke="#163d0e" stroke-width="1"/>
<rect x="183.72" y="555.10" width="7.6" height="6.30" fill="#96f264" stroke="#163d0e" stroke-width="1"/>
<line x1="183.72" y1="558.00" x2="191.32" y2="558.00" stroke="#163d0e" stroke-width="1"/>
<line x1="206.59" y1="590.00" x2="206.59" y2="591.80" stroke="#3a3a3a" stroke-width="1"/>
<rect x="204.59" y="590.40" width="4.0" height="0.80" fill="#96f264" stroke="#163d0e" stroke-width="1"/>
<rect x="202.79" y="590.60" width="7.6" height="0.40" fill="#96f264" stroke="#163d0e" stroke-width="1"/>
<line x1="202.79" y1="590.80" x2="210.39" y2="590.80" stroke="#163d0e" stroke-width="1"/>
<line x1="225.67" y1="596.50" x2="225.67" y2="600.50" stroke="#3a3a3a" stroke-width="1"/>
<rect x="223.67" y="598.00" width="4.0" height="1.70" fill="#96f264" stroke="#163d0e" stroke-width="1"/>
<rect x="221.87" y="598.60" width="7.6" height="0.80" fill="#96f264" stroke="#163d0e" stroke-width="1"/>
<line x1="221.87" y1="599.00" x2="229.47" y2="599.00" stroke="#163d0e" stroke-width="1"/>
<line x1="244.74" y1="576.50" x2="244.74" y2="583.00" stroke="#3a3a3a" stroke-width="1"/>
<rect x="242.74" y="577.20" width="4.0" height="4.80" fill="#96f264" stroke="#163d0e" stroke-width="1"/>
<rect x="240.94" y="577.80" width="7.6" height="3.70" fill="#96f264" stroke="#163d0e" stroke-width="1"/>
<line x1="240.94" y1="579.30" x2="248.54" y2="579.30" stroke="#163d0e" stroke-width="1"/>
<line x1="263.81" y1="563.70" x2="263.81" y2="576.50" stroke="#3a3a3a" stroke-width="1"/>
<rect x="261.81" y="567.40" width="4.0" height="7.60" fill="#96f264" stroke="#163d0e" stroke-width="1"/>
<rect x="260.01" y="569.70" width="7.6" height="3.70" fill="#96f264" stroke="#163d0e" stroke-width="1"/>
<line x1="260.01" y1="572.00" x2="267.61" y2="572.00" stroke="#163d0e" stroke-width="1"/>
<line x1="282.89" y1="588.50" x2="282.89" y2="596.00" stroke="#3a3a3a" stroke-width="1"/>
<rect x="280.89" y="589.50" width="4.0" height="5.50" fill="#96f264" stroke="#163d0e" stroke-width="1"/>
<rect x="279.09" y="590.30" width="7.6" height="4.10" fill="#96f264" stroke="#163d0e" stroke-width="1"/>
<line x1="279.09" y1="592.20" x2="286.69" y2="592.20" stroke="#163d0e" stroke-width="1"/>
<line x1="301.96" y1="595.00" x2="301.96" y2="603.20" stroke="#3a3a3a" stroke-width="1"/>
<rect x="299.96" y="596.00" width="4.0" height="5.50" fill="#96f264" stroke="#163d0e" stroke-width="1"/>
<rect x="298.16" y="596.80" width="7.6" height="3.60" fill="#96f264" stroke="#163d0e" stroke-width="1"/>
<line x1="298.16" y1="598.60" x2="305.76" y2="598.60" stroke="#163d0e" stroke-width="1"/>
<line x1="321.04" y1="575.10" x2="321.04" y2="587.00" stroke="#3a3a3a" stroke-width="1"/>
<rect x="319.04" y="578.10" width="4.0" height="7.40" fill="#96f264" stroke="#163d0e" stroke-width="1"/>
<rect x="317.24" y="579.80" width="7.6" height="4.90" fill="#96f264" stroke="#163d0e" stroke-width="1"/>
<line x1="317.24" y1="582.50" x2="324.84" y2="582.50" stroke="#163d0e" stroke-width="1"/>
<line x1="340.11" y1="557.40" x2="340.11" y2="576.40" stroke="#3a3a3a" stroke-width="1"/>
<rect x="338.11" y="558.60" width="4.0" height="14.50" fill="#96f264" stroke="#163d0e" stroke-width="1"/>
<rect x="336.31" y="564.50" width="7.6" height="4.50" fill="#96f264" stroke="#163d0e" stroke-width="1"/>
<line x1="336.31" y1="566.50" x2="343.91" y2="566.50" stroke="#163d0e" stroke-width="1"/>
<line x1="359.18" y1="592.00" x2="359.18" y2="597.30" stroke="#3a3a3a" stroke-width="1"/>
<rect x="357.18" y="593.00" width="4.0" height="2.00" fill="#96f264" stroke="#163d0e" stroke-width="1"/>
<rect x="355.38" y="593.30" width="7.6" height="0.70" fill="#96f264" stroke="#163d0e" stroke-width="1"/>
<line x1="355.38" y1="593.60" x2="362.98" y2="593.60" stroke="#163d0e" stroke-width="1"/>
<line x1="378.26" y1="599.90" x2="378.26" y2="612.00" stroke="#3a3a3a" stroke-width="1"/>
<rect x="376.26" y="600.80" width="4.0" height="5.70" fill="#96f264" stroke="#163d0e" stroke-width="1"/>
<rect x="374.46" y="601.30" width="7.6" height="3.70" fill="#96f264" stroke="#163d0e" stroke-width="1"/>
<line x1="374.46" y1="603.20" x2="382.06" y2="603.20" stroke="#163d0e" stroke-width="1"/>
<line x1="397.33" y1="574.20" x2="397.33" y2="583.80" stroke="#3a3a3a" stroke-width="1"/>
<rect x="395.33" y="574.80" width="4.0" height="6.70" fill="#96f264" stroke="#163d0e" stroke-width="1"/>
<rect x="393.53" y="575.30" width="7.6" height="4.90" fill="#96f264" stroke="#163d0e" stroke-width="1"/>
<line x1="393.53" y1="577.50" x2="401.13" y2="577.50" stroke="#163d0e" stroke-width="1"/>
<line x1="416.41" y1="544.00" x2="416.41" y2="571.00" stroke="#3a3a3a" stroke-width="1"/>
<rect x="414.41" y="549.00" width="4.0" height="18.40" fill="#96f264" stroke="#163d0e" stroke-width="1"/>
<rect x="412.61" y="550.80" width="7.6" height="6.10" fill="#96f264" stroke="#163d0e" stroke-width="1"/>
<line x1="412.61" y1="553.90" x2="420.21" y2="553.90" stroke="#163d0e" stroke-width="1"/>
<line x1="435.48" y1="593.00" x2="435.48" y2="602.80" stroke="#3a3a3a" stroke-width="1"/>
<rect x="433.48" y="593.60" width="4.0" height="5.90" fill="#96f264" stroke="#163d0e" stroke-width="1"/>
<rect x="431.68" y="593.80" width="7.6" height="5.00" fill="#96f264" stroke="#163d0e" stroke-width="1"/>
<line x1="431.68" y1="596.30" x2="439.28" y2="596.30" stroke="#163d0e" stroke-width="1"/>
<line x1="454.55" y1="602.80" x2="454.55" y2="613.30" stroke="#3a3a3a" stroke-width="1"/>
<rect x="452.55" y="604.00" width="4.0" height="8.40" fill="#96f264" stroke="#163d0e" stroke-width="1"/>
<rect x="450.75" y="604.70" width="7.6" height="3.10" fill="#96f264" stroke="#163d0e" stroke-width="1"/>
<line x1="450.75" y1="606.00" x2="458.35" y2="606.00" stroke="#163d0e" stroke-width="1"/>
<line x1="473.63" y1="573.40" x2="473.63" y2="584.40" stroke="#3a3a3a" stroke-width="1"/>
<rect x="471.63" y="575.50" width="4.0" height="7.00" fill="#96f264" stroke="#163d0e" stroke-width="1"/>
<rect x="469.83" y="576.50" width="7.6" height="4.60" fill="#96f264" stroke="#163d0e" stroke-width="1"/>
<line x1="469.83" y1="578.90" x2="477.43" y2="578.90" stroke="#163d0e" stroke-width="1"/>
<line x1="492.70" y1="541.90" x2="492.70" y2="573.40" stroke="#3a3a3a" stroke-width="1"/>
<rect x="490.70" y="551.50" width="4.0" height="17.40" fill="#96f264" stroke="#163d0e" stroke-width="1"/>
<rect x="488.90" y="553.20" width="7.6" height="9.10" fill="#96f264" stroke="#163d0e" stroke-width="1"/>
<line x1="488.90" y1="558.50" x2="496.50" y2="558.50" stroke="#163d0e" stroke-width="1"/>
<line x1="511.78" y1="593.10" x2="511.78" y2="601.00" stroke="#3a3a3a" stroke-width="1"/>
<rect x="509.78" y="594.00" width="4.0" height="4.50" fill="#96f264" stroke="#163d0e" stroke-width="1"/>
<rect x="507.98" y="594.40" width="7.6" height="3.30" fill="#96f264" stroke="#163d0e" stroke-width="1"/>
<line x1="507.98" y1="595.80" x2="515.58" y2="595.80" stroke="#163d0e" stroke-width="1"/>
<line x1="530.85" y1="599.60" x2="530.85" y2="612.80" stroke="#3a3a3a" stroke-width="1"/>
<rect x="528.85" y="601.50" width="4.0" height="8.00" fill="#96f264" stroke="#163d0e" stroke-width="1"/>
<rect x="527.05" y="602.90" width="7.6" height="5.00" fill="#96f264" stroke="#163d0e" stroke-width="1"/>
<line x1="527.05" y1="605.40" x2="534.65" y2="605.40" stroke="#163d0e" stroke-width="1"/>
<line x1="549.92" y1="574.70" x2="549.92" y2="589.40" stroke="#3a3a3a" stroke-width="1"/>
<rect x="547.92" y="576.50" width="4.0" height="8.70" fill="#96f264" stroke="#163d0e" stroke-width="1"/>
<rect x="546.12" y="577.80" width="7.6" height="5.50" fill="#96f264" stroke="#163d0e" stroke-width="1"/>
<line x1="546.12" y1="580.20" x2="553.72" y2="580.20" stroke="#163d0e" stroke-width="1"/>
<line x1="569.00" y1="552.40" x2="569.00" y2="577.20" stroke="#3a3a3a" stroke-width="1"/>
<rect x="567.00" y="553.50" width="4.0" height="19.60" fill="#96f264" stroke="#163d0e" stroke-width="1"/>
<rect x="565.20" y="556.50" width="7.6" height="9.10" fill="#96f264" stroke="#163d0e" stroke-width="1"/>
<line x1="565.20" y1="559.50" x2="572.80" y2="559.50" stroke="#163d0e" stroke-width="1"/>
<line x1="588.07" y1="591.70" x2="588.07" y2="603.20" stroke="#3a3a3a" stroke-width="1"/>
<rect x="586.07" y="593.50" width="4.0" height="6.50" fill="#96f264" stroke="#163d0e" stroke-width="1"/>
<rect x="584.27" y="594.90" width="7.6" height="4.20" fill="#96f264" stroke="#163d0e" stroke-width="1"/>
<line x1="584.27" y1="596.80" x2="591.87" y2="596.80" stroke="#163d0e" stroke-width="1"/>
<line x1="607.15" y1="600.40" x2="607.15" y2="615.10" stroke="#3a3a3a" stroke-width="1"/>
<rect x="605.15" y="603.00" width="4.0" height="7.50" fill="#96f264" stroke="#163d0e" stroke-width="1"/>
<rect x="603.35" y="605.00" width="7.6" height="4.60" fill="#96f264" stroke="#163d0e" stroke-width="1"/>
<line x1="603.35" y1="606.90" x2="610.95" y2="606.90" stroke="#163d0e" stroke-width="1"/>
<line x1="626.22" y1="574.70" x2="626.22" y2="588.50" stroke="#3a3a3a" stroke-width="1"/>
<rect x="624.22" y="576.50" width="4.0" height="7.40" fill="#96f264" stroke="#163d0e" stroke-width="1"/>
<rect x="622.42" y="577.50" width="7.6" height="4.60" fill="#96f264" stroke="#163d0e" stroke-width="1"/>
<line x1="622.42" y1="579.30" x2="630.02" y2="579.30" stroke="#163d0e" stroke-width="1"/>
<line x1="645.29" y1="552.40" x2="645.29" y2="568.30" stroke="#3a3a3a" stroke-width="1"/>
<rect x="643.29" y="554.00" width="4.0" height="11.00" fill="#96f264" stroke="#163d0e" stroke-width="1"/>
<rect x="641.49" y="556.50" width="7.6" height="7.50" fill="#96f264" stroke="#163d0e" stroke-width="1"/>
<line x1="641.49" y1="559.00" x2="649.09" y2="559.00" stroke="#163d0e" stroke-width="1"/>
<line x1="664.37" y1="593.10" x2="664.37" y2="612.40" stroke="#3a3a3a" stroke-width="1"/>
<rect x="662.37" y="595.00" width="4.0" height="7.50" fill="#96f264" stroke="#163d0e" stroke-width="1"/>
<rect x="660.57" y="596.80" width="7.6" height="4.60" fill="#96f264" stroke="#163d0e" stroke-width="1"/>
<line x1="660.57" y1="598.60" x2="668.17" y2="598.60" stroke="#163d0e" stroke-width="1"/>
<line x1="683.44" y1="604.00" x2="683.44" y2="628.60" stroke="#3a3a3a" stroke-width="1"/>
<rect x="681.44" y="606.00" width="4.0" height="8.50" fill="#96f264" stroke="#163d0e" stroke-width="1"/>
<rect x="679.64" y="608.20" width="7.6" height="5.30" fill="#96f264" stroke="#163d0e" stroke-width="1"/>
<line x1="679.64" y1="610.60" x2="687.24" y2="610.60" stroke="#163d0e" stroke-width="1"/>
<line x1="702.52" y1="570.90" x2="702.52" y2="595.50" stroke="#3a3a3a" stroke-width="1"/>
<rect x="700.52" y="574.60" width="4.0" height="8.60" fill="#96f264" stroke="#163d0e" stroke-width="1"/>
<rect x="698.72" y="576.50" width="7.6" height="5.20" fill="#96f264" stroke="#163d0e" stroke-width="1"/>
<line x1="698.72" y1="579.00" x2="706.32" y2="579.00" stroke="#163d0e" stroke-width="1"/>
<line x1="721.59" y1="548.10" x2="721.59" y2="576.50" stroke="#3a3a3a" stroke-width="1"/>
<rect x="719.59" y="551.90" width="4.0" height="18.00" fill="#96f264" stroke="#163d0e" stroke-width="1"/>
<rect x="717.79" y="554.80" width="7.6" height="10.40" fill="#96f264" stroke="#163d0e" stroke-width="1"/>
<line x1="717.79" y1="559.50" x2="725.39" y2="559.50" stroke="#163d0e" stroke-width="1"/>
<line x1="740.66" y1="591.70" x2="740.66" y2="619.10" stroke="#3a3a3a" stroke-width="1"/>
<rect x="738.66" y="593.60" width="4.0" height="10.40" fill="#96f264" stroke="#163d0e" stroke-width="1"/>
<rect x="736.86" y="596.00" width="7.6" height="5.70" fill="#96f264" stroke="#163d0e" stroke-width="1"/>
<line x1="736.86" y1="599.30" x2="744.46" y2="599.30" stroke="#163d0e" stroke-width="1"/>
<line x1="759.74" y1="599.30" x2="759.74" y2="631.90" stroke="#3a3a3a" stroke-width="1"/>
<rect x="757.74" y="602.10" width="4.0" height="19.90" fill="#96f264" stroke="#163d0e" stroke-width="1"/>
<rect x="755.94" y="606.20" width="7.6" height="8.30" fill="#96f264" stroke="#163d0e" stroke-width="1"/>
<line x1="755.94" y1="613.50" x2="763.54" y2="613.50" stroke="#163d0e" stroke-width="1"/>
<line x1="778.81" y1="571.80" x2="778.81" y2="586.60" stroke="#3a3a3a" stroke-width="1"/>
<rect x="776.81" y="573.70" width="4.0" height="11.70" fill="#96f264" stroke="#163d0e" stroke-width="1"/>
<rect x="775.01" y="576.00" width="7.6" height="6.20" fill="#96f264" stroke="#163d0e" stroke-width="1"/>
<line x1="775.01" y1="579.40" x2="782.61" y2="579.40" stroke="#163d0e" stroke-width="1"/>
<line x1="797.89" y1="546.20" x2="797.89" y2="572.20" stroke="#3a3a3a" stroke-width="1"/>
<rect x="795.89" y="548.10" width="4.0" height="17.10" fill="#96f264" stroke="#163d0e" stroke-width="1"/>
<rect x="794.09" y="552.50" width="7.6" height="7.60" fill="#96f264" stroke="#163d0e" stroke-width="1"/>
<line x1="794.09" y1="555.70" x2="801.69" y2="555.70" stroke="#163d0e" stroke-width="1"/>
<line x1="816.96" y1="585.10" x2="816.96" y2="611.60" stroke="#3a3a3a" stroke-width="1"/>
<rect x="814.96" y="589.80" width="4.0" height="11.40" fill="#96f264" stroke="#163d0e" stroke-width="1"/>
<rect x="813.16" y="591.70" width="7.6" height="4.30" fill="#96f264" stroke="#163d0e" stroke-width="1"/>
<line x1="813.16" y1="593.60" x2="820.76" y2="593.60" stroke="#163d0e" stroke-width="1"/>
<polyline points="54.00,588.10 73.07,607.20 92.15,573.40 111.22,532.50 130.30,586.30 149.37,598.00 168.44,570.10 187.52,563.40 206.59,590.80 225.67,599.00 244.74,580.20 263.81,574.70 282.89,593.10 301.96,599.90 321.04,585.50 340.11,565.00 359.18,593.60 378.26,601.00 397.33,574.70 416.41,553.90 435.48,596.30 454.55,606.00 473.63,580.20 492.70,552.60 511.78,594.90 530.85,604.60 549.92,580.20 569.00,573.90 588.07,597.70 607.15,608.70 626.22,579.30 645.29,564.80 664.37,600.40 683.44,612.50 702.52,580.30 721.59,570.30 740.66,601.70 759.74,622.40 778.81,584.70 797.89,542.50 816.96,589.80" fill="none" stroke="#dc2224" stroke-width="1.35" stroke-linejoin="round"/>
<polyline points="54.00,588.10 73.07,607.20 92.15,573.40 111.22,532.50 130.30,586.30 149.37,598.00 168.44,569.80 187.52,558.90 206.59,590.80 225.67,599.00 244.74,579.30 263.81,572.90 282.89,592.20 301.96,598.00 321.04,583.50 340.11,569.50 359.18,593.60 378.26,602.30 397.33,577.50 416.41,556.90 435.48,596.10 454.55,606.00 473.63,578.40 492.70,560.60 511.78,595.80 530.85,604.60 549.92,580.80 569.00,562.30 588.07,596.80 607.15,606.90 626.22,579.30 645.29,560.60 664.37,598.60 683.44,609.70 702.52,577.50 721.59,560.40 740.66,599.30 759.74,611.70 778.81,578.40 797.89,558.20 816.96,591.70" fill="none" stroke="#2020b8" stroke-width="1.35" stroke-linejoin="round"/>
<rect x="44.50" y="521.60" width="781.80" height="115.20" fill="none" stroke="#111" stroke-width="1.2"/>
<path d="M39.70 633.80H44.50 M39.70 609.45H44.50 M39.70 585.10H44.50 M39.70 560.75H44.50 M39.70 536.40H44.50 M54.00 636.80V641.80 M130.30 636.80V641.80 M206.59 636.80V641.80 M282.89 636.80V641.80 M359.18 636.80V641.80 M435.48 636.80V641.80 M511.78 636.80V641.80 M588.07 636.80V641.80 M664.37 636.80V641.80 M740.66 636.80V641.80 M816.96 636.80V641.80" stroke="#111" stroke-width="1.25" fill="none"/>
<text x="35.10" y="637.80" font-size="11.02" text-anchor="end" textLength="23.16" lengthAdjust="spacingAndGlyphs" fill="#111">20.0</text>
<text x="35.10" y="613.45" font-size="11.02" text-anchor="end" textLength="23.16" lengthAdjust="spacingAndGlyphs" fill="#111">22.5</text>
<text x="35.10" y="589.10" font-size="11.02" text-anchor="end" textLength="23.16" lengthAdjust="spacingAndGlyphs" fill="#111">25.0</text>
<text x="35.10" y="564.75" font-size="11.02" text-anchor="end" textLength="23.16" lengthAdjust="spacingAndGlyphs" fill="#111">27.5</text>
<text x="35.10" y="540.40" font-size="11.02" text-anchor="end" textLength="23.16" lengthAdjust="spacingAndGlyphs" fill="#111">30.0</text>
<text x="44.70" y="517.30" font-size="13.25" text-anchor="start" textLength="129.44" lengthAdjust="spacingAndGlyphs" fill="#111">2m temperature (°C)</text>
<text x="54.00" y="654.70" font-size="11.02" text-anchor="middle" textLength="20.36" lengthAdjust="spacingAndGlyphs" fill="#111">12Z</text>
<text x="54.00" y="667.00" font-size="11.02" text-anchor="middle" textLength="32.86" lengthAdjust="spacingAndGlyphs" fill="#111">06Mar</text>
<text x="130.30" y="654.70" font-size="11.02" text-anchor="middle" textLength="20.36" lengthAdjust="spacingAndGlyphs" fill="#111">12Z</text>
<text x="130.30" y="667.00" font-size="11.02" text-anchor="middle" textLength="32.86" lengthAdjust="spacingAndGlyphs" fill="#111">07Mar</text>
<text x="206.59" y="654.70" font-size="11.02" text-anchor="middle" textLength="20.36" lengthAdjust="spacingAndGlyphs" fill="#111">12Z</text>
<text x="206.59" y="667.00" font-size="11.02" text-anchor="middle" textLength="32.86" lengthAdjust="spacingAndGlyphs" fill="#111">08Mar</text>
<text x="282.89" y="654.70" font-size="11.02" text-anchor="middle" textLength="20.36" lengthAdjust="spacingAndGlyphs" fill="#111">12Z</text>
<text x="282.89" y="667.00" font-size="11.02" text-anchor="middle" textLength="32.86" lengthAdjust="spacingAndGlyphs" fill="#111">09Mar</text>
<text x="359.18" y="654.70" font-size="11.02" text-anchor="middle" textLength="20.36" lengthAdjust="spacingAndGlyphs" fill="#111">12Z</text>
<text x="359.18" y="667.00" font-size="11.02" text-anchor="middle" textLength="32.86" lengthAdjust="spacingAndGlyphs" fill="#111">10Mar</text>
<text x="435.48" y="654.70" font-size="11.02" text-anchor="middle" textLength="20.36" lengthAdjust="spacingAndGlyphs" fill="#111">12Z</text>
<text x="435.48" y="667.00" font-size="11.02" text-anchor="middle" textLength="32.86" lengthAdjust="spacingAndGlyphs" fill="#111">11Mar</text>
<text x="511.78" y="654.70" font-size="11.02" text-anchor="middle" textLength="20.36" lengthAdjust="spacingAndGlyphs" fill="#111">12Z</text>
<text x="511.78" y="667.00" font-size="11.02" text-anchor="middle" textLength="32.86" lengthAdjust="spacingAndGlyphs" fill="#111">12Mar</text>
<text x="588.07" y="654.70" font-size="11.02" text-anchor="middle" textLength="20.36" lengthAdjust="spacingAndGlyphs" fill="#111">12Z</text>
<text x="588.07" y="667.00" font-size="11.02" text-anchor="middle" textLength="32.86" lengthAdjust="spacingAndGlyphs" fill="#111">13Mar</text>
<text x="664.37" y="654.70" font-size="11.02" text-anchor="middle" textLength="20.36" lengthAdjust="spacingAndGlyphs" fill="#111">12Z</text>
<text x="664.37" y="667.00" font-size="11.02" text-anchor="middle" textLength="32.86" lengthAdjust="spacingAndGlyphs" fill="#111">14Mar</text>
<text x="740.66" y="654.70" font-size="11.02" text-anchor="middle" textLength="20.36" lengthAdjust="spacingAndGlyphs" fill="#111">12Z</text>
<text x="740.66" y="667.00" font-size="11.02" text-anchor="middle" textLength="32.86" lengthAdjust="spacingAndGlyphs" fill="#111">15Mar</text>
<text x="816.96" y="654.70" font-size="11.02" text-anchor="middle" textLength="20.36" lengthAdjust="spacingAndGlyphs" fill="#111">12Z</text>
<text x="816.96" y="667.00" font-size="11.02" text-anchor="middle" textLength="32.86" lengthAdjust="spacingAndGlyphs" fill="#111">16Mar</text>
</svg>
</body></html>
